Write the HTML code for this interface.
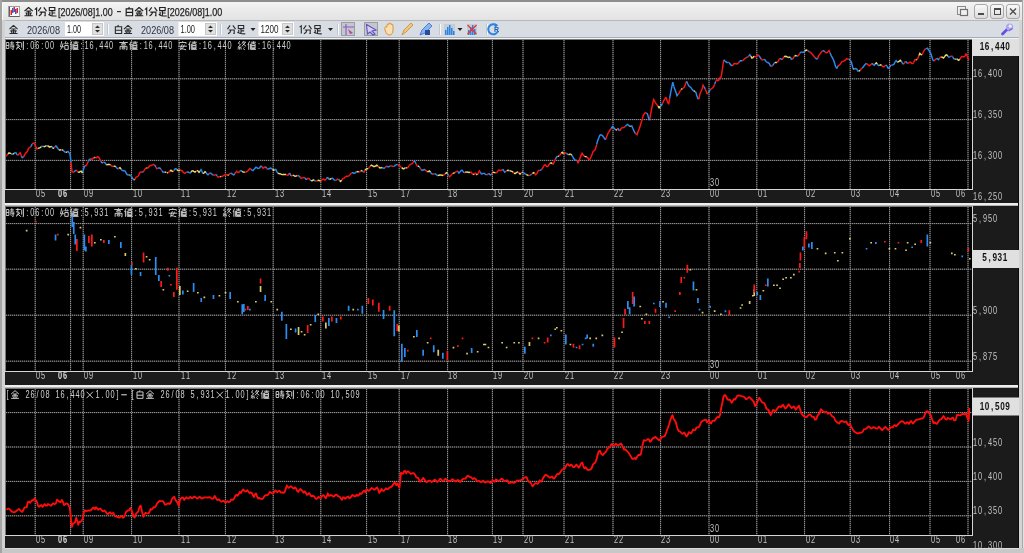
<!DOCTYPE html><html><head><meta charset="utf-8"><style>html,body{margin:0;padding:0}body{width:1024px;height:553px;overflow:hidden;background:#c0c0c0}svg{position:absolute;left:0;top:0;display:block;will-change:transform}</style></head><body>
<svg width="1024" height="553" viewBox="0 0 1024 553">
<defs>
<linearGradient id="tg" x1="0" y1="0" x2="0" y2="1"><stop offset="0" stop-color="#f4f4f4"/><stop offset="0.4" stop-color="#ececec"/><stop offset="1" stop-color="#e3e3e3"/></linearGradient>
<linearGradient id="bg" x1="0" y1="0" x2="0" y2="1"><stop offset="0" stop-color="#fbfbfb"/><stop offset="1" stop-color="#dadada"/></linearGradient>
<path id="k37329" d="M5,0.5L0.5,4.5M5,0.5L9.5,4.5M2.5,4.5H7.5M1.5,6.5H8.5M5,4V9.5M0.5,9.5H9.5M2.5,7.2L3.5,8.8M7.5,7.2L6.5,8.8" fill="none"/>
<path id="k20998" d="M3.5,0.5L0.5,4.5M6.5,0.5L9.5,4.5M2,5.5H8V9.5L7,9.5M4.5,5.5Q4,8.5 1,9.8" fill="none"/>
<path id="k36275" d="M2,0.5H8V4H2ZM5,4V9M5,6.5H8.5M2.5,5.5V9.5M1,8Q3,10 9.8,9.8" fill="none"/>
<path id="k30333" d="M5,0L4,1.8M1.5,2H8.5V9.5H1.5ZM1.5,5.8H8.5" fill="none"/>
<path id="k26178" d="M0.5,1.5H3.5V8.5H0.5ZM0.5,5H3.5M5,2H9.5M7,0V4.5M4.5,4.5H10M5,6.5H10M8.5,5V9.8L7.5,9.5M5.5,7.5L6.5,8.8" fill="none"/>
<path id="k21051" d="M2.5,0V1.2M0,1.5H6M3,2L1,4.5H4L1,8.5M0.5,9.5L5,5.5M3,7L6,10M7,1.5V7.5M9,0V9.8L8,9.5" fill="none"/>
<path id="k22987" d="M2,0L0.5,6.5H4.5M3.5,2.5Q3,7 0.5,9.8M7,0L5.5,3H9.5M8.5,1.5L9.5,3M5.5,5H9.5V9.5H5.5Z" fill="none"/>
<path id="k20516" d="M2.5,0L0.5,4.5M1.5,3V10M4,1.2H10M7,0V3M4.5,3H9V8.5H4.5ZM4.5,5H9M4.5,7H9M3.5,3V9.5H10" fill="none"/>
<path id="k39640" d="M5,0V1.2M0,1.5H10M3,2.8H7V4.5H3ZM1,6V10M1,6H9V10L8,9.8M3.5,7H6.5V9H3.5Z" fill="none"/>
<path id="k23433" d="M5,0V1.2M1,3V1.5H9V3M0,5.8H10M4.5,3.5L2.5,8.5Q6,9 9,10M7,4Q6.5,8 2,10" fill="none"/>
<path id="k32066" d="M2.5,0L1,2.5L3.5,4L0.5,7H4.5M2.5,7V10M1,8L0.5,9.5M4,8L4.5,9.5M7,0L5,3M6,1H9.5L5,6M6.5,3L10,6M7,6.5L8,7.5M6.5,8.5L8.5,10" fill="none"/>
</defs>
<rect x="0" y="0" width="1024" height="553" fill="#c8c8c8"/>
<rect x="0" y="0" width="1024" height="2" fill="#8e8e8e"/><rect x="0" y="0" width="2" height="553" fill="#a4a4a4"/>
<rect x="2" y="2" width="1020" height="18" fill="url(#tg)"/>
<rect x="2" y="2" width="1" height="18" fill="#fafafa"/>
<rect x="8.5" y="6.5" width="11" height="10" fill="#fcfcfc" stroke="#a0a0a0" stroke-width="1"/>
<path d="M9.5,6.5V16.5H19.5" stroke="#606060" fill="none"/>
<rect x="10.5" y="10" width="1.5" height="5" fill="#e82020"/>
<rect x="12" y="8" width="1.5" height="5" fill="#2060e0"/>
<rect x="13.5" y="7" width="1.5" height="5" fill="#e82020"/>
<rect x="15" y="9" width="1.5" height="5" fill="#2060e0"/>
<rect x="16.5" y="8" width="1.5" height="5" fill="#e82020"/>
<use href="#k37329" transform="translate(24.00,7.00) scale(0.9199999999999999)" stroke="#1e1e1e" stroke-width="1.25"/>
<use href="#k20998" transform="translate(37.80,7.00) scale(0.9199999999999999)" stroke="#1e1e1e" stroke-width="1.25"/>
<use href="#k36275" transform="translate(47.50,7.00) scale(0.9199999999999999)" stroke="#1e1e1e" stroke-width="1.25"/>
<use href="#k30333" transform="translate(124.80,7.00) scale(0.9199999999999999)" stroke="#1e1e1e" stroke-width="1.25"/>
<use href="#k37329" transform="translate(134.50,7.00) scale(0.9199999999999999)" stroke="#1e1e1e" stroke-width="1.25"/>
<use href="#k20998" transform="translate(148.50,7.00) scale(0.9199999999999999)" stroke="#1e1e1e" stroke-width="1.25"/>
<use href="#k36275" transform="translate(157.80,7.00) scale(0.9199999999999999)" stroke="#1e1e1e" stroke-width="1.25"/>
<path d="M34.8,9.6L36.6,8V15.6" stroke="#1e1e1e" stroke-width="1.15" fill="none"/>
<text stroke="#1e1e1e" stroke-width="0.25" x="58" y="15.5" textLength="54.599999999999994" lengthAdjust="spacingAndGlyphs" font-family="Liberation Sans" font-size="10.5" fill="#1e1e1e">[2026/08]1.00</text>
<rect x="117" y="11" width="4" height="1.2" fill="#303030"/>
<path d="M144.9,9.6L146.7,8V15.6" stroke="#1e1e1e" stroke-width="1.15" fill="none"/>
<text stroke="#1e1e1e" stroke-width="0.25" x="167.2" y="15.5" textLength="55.0" lengthAdjust="spacingAndGlyphs" font-family="Liberation Sans" font-size="10.5" fill="#1e1e1e">[2026/08]1.00</text>
<rect x="957.5" y="6.5" width="8" height="8" fill="#f0f0f0" stroke="#8a8a8a"/>
<rect x="960.5" y="9.5" width="7" height="6" fill="#f0f0f0" stroke="#707070" stroke-width="1.2"/>
<rect x="974.5" y="4.5" width="13" height="14" rx="2.5" fill="url(#bg)" stroke="#a8a8a8"/>
<rect x="990.5" y="4.5" width="13" height="14" rx="2.5" fill="url(#bg)" stroke="#a8a8a8"/>
<rect x="1006.5" y="4.5" width="13" height="14" rx="2.5" fill="url(#bg)" stroke="#a8a8a8"/>
<rect x="978" y="13" width="6" height="2" fill="#4a4a4a"/>
<rect x="994.5" y="8.5" width="6" height="6" fill="none" stroke="#4a4a4a" stroke-width="1"/><rect x="994" y="8" width="7" height="2" fill="#4a4a4a"/>
<path d="M1010,8.5L1016,14.5M1016,8.5L1010,14.5" stroke="#4a4a4a" stroke-width="1.3"/>
<rect x="5" y="20" width="1015" height="17" fill="#d8dce3"/>
<rect x="2" y="20" width="1020" height="1" fill="#b8b8b8"/>
<rect x="5" y="37" width="1015" height="1" fill="#a6aebb"/>
<use href="#k37329" transform="translate(9.00,25.00) scale(0.9)" stroke="#2a2a2a" stroke-width="1.22"/>
<text x="27" y="33.5" textLength="33" lengthAdjust="spacingAndGlyphs" font-family="Liberation Sans" font-size="10.5" fill="#2a3444">2026/08</text>
<rect x="65" y="22" width="39" height="14" fill="#ffffff"/>
<rect x="92.5" y="23.5" width="10" height="11" fill="#e0e0e0" stroke="#c8c8c8" stroke-width="1"/>
<path d="M95,28L97.5,25.5L100,28ZM95,30L97.5,32.5L100,30Z" fill="#2a2a2a"/>
<text x="67" y="32.5" textLength="14" lengthAdjust="spacingAndGlyphs" font-family="Liberation Sans" font-size="11" fill="#202020">1.00</text>
<rect x="107" y="24" width="1" height="11" fill="#c4c8ce"/><rect x="108" y="24" width="1" height="11" fill="#f8f9fa"/>
<use href="#k30333" transform="translate(114.00,25.00) scale(0.9)" stroke="#2a2a2a" stroke-width="1.22"/>
<use href="#k37329" transform="translate(123.50,25.00) scale(0.9)" stroke="#2a2a2a" stroke-width="1.22"/>
<text x="141" y="33.5" textLength="33" lengthAdjust="spacingAndGlyphs" font-family="Liberation Sans" font-size="10.5" fill="#2a3444">2026/08</text>
<rect x="178.5" y="22" width="38.5" height="14" fill="#ffffff"/>
<rect x="205.5" y="23.5" width="10" height="11" fill="#e0e0e0" stroke="#c8c8c8" stroke-width="1"/>
<path d="M208,28L210.5,25.5L213,28ZM208,30L210.5,32.5L213,30Z" fill="#2a2a2a"/>
<text x="180.5" y="32.5" textLength="14.5" lengthAdjust="spacingAndGlyphs" font-family="Liberation Sans" font-size="11" fill="#202020">1.00</text>
<rect x="220" y="24" width="1" height="11" fill="#c4c8ce"/><rect x="221" y="24" width="1" height="11" fill="#f8f9fa"/>
<use href="#k20998" transform="translate(227.00,25.00) scale(0.9)" stroke="#2a2a2a" stroke-width="1.22"/>
<use href="#k36275" transform="translate(236.50,25.00) scale(0.9)" stroke="#2a2a2a" stroke-width="1.22"/>
<path d="M250.5,28H255.5L253.0,31Z" fill="#202020"/>
<rect x="258.5" y="22" width="35.5" height="14" fill="#ffffff"/>
<rect x="282.5" y="23.5" width="10" height="11" fill="#e0e0e0" stroke="#c8c8c8" stroke-width="1"/>
<path d="M285,28L287.5,25.5L290,28ZM285,30L287.5,32.5L290,30Z" fill="#2a2a2a"/>
<text x="260.5" y="32.5" textLength="18.0" lengthAdjust="spacingAndGlyphs" font-family="Liberation Sans" font-size="11" fill="#202020">1200</text>
<path d="M299.6,27.2L301.3,25.8V33.5" stroke="#2a2a2a" stroke-width="1.1" fill="none"/>
<use href="#k20998" transform="translate(303.00,25.00) scale(0.9)" stroke="#2a2a2a" stroke-width="1.22"/>
<use href="#k36275" transform="translate(313.00,25.00) scale(0.9)" stroke="#2a2a2a" stroke-width="1.22"/>
<path d="M328,28H333L330.5,31Z" fill="#202020"/>
<rect x="337" y="24" width="1" height="11" fill="#c4c8ce"/><rect x="338" y="24" width="1" height="11" fill="#f8f9fa"/>
<rect x="341.5" y="22.5" width="13" height="13" fill="#c4c7cc" stroke="#9a9ea4" stroke-width="1"/>
<rect x="364.5" y="22.5" width="13" height="13" fill="#c4c7cc" stroke="#9a9ea4" stroke-width="1"/>
<path d="M343,27H354M346,24V35" stroke="#8858c8" stroke-width="1.1"/><path d="M348,29L353,33L350,34Z" fill="#c04090"/>
<path d="M366.5,24.5L376,30L372,31L375,34L373,35L370,32L367.5,34Z" fill="#d8d0f8" stroke="#6050c0" stroke-width="1.1"/>
<path d="M385,30Q384,26 387,27V24.5Q388,23 389,24.5V23.5Q390,22.5 391,23.5V24.5Q392,23.5 393,25V30Q393,35 389,35Q386,35 385,30Z" fill="#f8e0b0" stroke="#e09040" stroke-width="1"/>
<path d="M402,35L404,30L411,23L413,25L406,32Z" fill="#f0c878" stroke="#c88838" stroke-width="0.8"/>
<path d="M420,35L422,30L429,23L432,26L425,33Z" fill="#88b4f0" stroke="#3868c8" stroke-width="0.8"/><rect x="425" y="30" width="5" height="5" fill="#2a4aa0"/>
<rect x="439" y="24" width="1" height="11" fill="#c4c8ce"/><rect x="440" y="24" width="1" height="11" fill="#f8f9fa"/>
<rect x="444" y="24" width="11" height="11" fill="#c4ccd6"/>
<rect x="445" y="30" width="1.5" height="5" fill="#2884e4"/>
<rect x="447" y="27" width="1.5" height="8" fill="#2884e4"/>
<rect x="449" y="25" width="1.5" height="10" fill="#2884e4"/>
<rect x="451" y="28" width="1.5" height="7" fill="#2884e4"/>
<rect x="453" y="31" width="1.5" height="4" fill="#2884e4"/>
<path d="M457.5,28H462.5L460.0,31Z" fill="#202020"/>
<rect x="467" y="24" width="10" height="11" fill="#c4ccd6"/>
<rect x="468" y="30" width="1.5" height="5" fill="#2884e4"/>
<rect x="470" y="27" width="1.5" height="8" fill="#2884e4"/>
<rect x="472" y="25" width="1.5" height="10" fill="#2884e4"/>
<rect x="474" y="29" width="1.5" height="6" fill="#2884e4"/>
<path d="M467.5,25L476.5,34M476.5,25L467.5,34" stroke="#f03030" stroke-width="1.2"/>
<rect x="486" y="24" width="1" height="11" fill="#c4c8ce"/><rect x="487" y="24" width="1" height="11" fill="#f8f9fa"/>
<path d="M497,26A5,5 0 1 0 498,31" fill="none" stroke="#2884e4" stroke-width="2"/><path d="M494,23L498,25L495,28Z" fill="#2884e4"/>
<text x="494" y="32" font-family="Liberation Sans" font-size="7" font-weight="bold" fill="#2060c0">R</text>
<path d="M1002.5,34L1007.5,29" stroke="#6452e6" stroke-width="2.8" stroke-linecap="round"/><circle cx="1009.6" cy="27" r="3.6" fill="#aaa6f0"/><circle cx="1010.2" cy="26.2" r="1.6" fill="#eceef8"/><path d="M1008.5,31L1012.5,28.5" stroke="#7a60d8" stroke-width="1.2"/>
<rect x="0" y="20" width="2" height="533" fill="#a4a4a4"/>
<rect x="2" y="20" width="3" height="533" fill="#d2d2d2"/>
<rect x="1019" y="20" width="3" height="533" fill="#d4d4d4"/>
<rect x="1022" y="0" width="1" height="553" fill="#a8a8a8"/><rect x="1023" y="0" width="1" height="553" fill="#e2e2e2"/>
<rect x="5" y="38" width="1014" height="1" fill="#f2f2f2"/>
<rect x="5" y="39" width="1014" height="509" fill="#1b1b1b"/>
<rect x="5" y="203" width="1014" height="2" fill="#eeeeee"/><rect x="5" y="205" width="1014" height="1" fill="#b4b4b4"/>
<rect x="5" y="385" width="1014" height="2" fill="#eeeeee"/><rect x="5" y="387" width="1014" height="1" fill="#b4b4b4"/>
<rect x="1018" y="39" width="1" height="509" fill="#0c0c0c"/>
<rect x="5" y="39" width="967" height="150" fill="#000"/>
<rect x="5" y="39" width="967" height="1" fill="#787878"/><rect x="5" y="39" width="1" height="150" fill="#787878"/>
<rect x="5" y="189" width="968" height="1" fill="#d6d6d6"/><rect x="972" y="39" width="1" height="150" fill="#d6d6d6"/>
<path d="M35.2,40V189M70.6,40V189M83.2,40V189M131.6,40V189M179,40V189M225.4,40V189M273.2,40V189M320.8,40V189M366.6,40V189M399.2,40V189M447.6,40V189M492.4,40V189M523,40V189M564,40V189M613,40V189M660.6,40V189M709,40V189M756.8,40V189M804.6,40V189M850.2,40V189M889.6,40V189M930,40V189M968,40V189M6,78.8H972M6,119.6H972M6,160.4H972" stroke="#3c3c3c" stroke-width="1" fill="none"/>
<path d="M35.2,40V189M70.6,40V189M83.2,40V189M131.6,40V189M179,40V189M225.4,40V189M273.2,40V189M320.8,40V189M366.6,40V189M399.2,40V189M447.6,40V189M492.4,40V189M523,40V189M564,40V189M613,40V189M660.6,40V189M709,40V189M756.8,40V189M804.6,40V189M850.2,40V189M889.6,40V189M930,40V189M968,40V189M6,78.8H972M6,119.6H972M6,160.4H972" stroke="#989898" stroke-width="1" stroke-dasharray="1 1" fill="none"/>
<text transform="translate(0,197.2) scale(0.74,1)" x="51.35 58.11" y="0" text-anchor="middle" font-family="Liberation Sans" font-size="10" fill="#c4c4c4">05</text>
<text transform="translate(0,197.2) scale(0.74,1)" x="81.08 87.84" y="0" text-anchor="middle" font-family="Liberation Sans" font-size="10" font-weight="bold" fill="#d8d8d8">06</text>
<text transform="translate(0,197.2) scale(0.74,1)" x="116.22 122.97" y="0" text-anchor="middle" font-family="Liberation Sans" font-size="10" fill="#c4c4c4">09</text>
<text transform="translate(0,197.2) scale(0.74,1)" x="182.43 189.19" y="0" text-anchor="middle" font-family="Liberation Sans" font-size="10" fill="#c4c4c4">10</text>
<text transform="translate(0,197.2) scale(0.74,1)" x="247.30 254.05" y="0" text-anchor="middle" font-family="Liberation Sans" font-size="10" fill="#c4c4c4">11</text>
<text transform="translate(0,197.2) scale(0.74,1)" x="309.46 316.22" y="0" text-anchor="middle" font-family="Liberation Sans" font-size="10" fill="#c4c4c4">12</text>
<text transform="translate(0,197.2) scale(0.74,1)" x="374.32 381.08" y="0" text-anchor="middle" font-family="Liberation Sans" font-size="10" fill="#c4c4c4">13</text>
<text transform="translate(0,197.2) scale(0.74,1)" x="437.84 444.59" y="0" text-anchor="middle" font-family="Liberation Sans" font-size="10" fill="#c4c4c4">14</text>
<text transform="translate(0,197.2) scale(0.74,1)" x="500.00 506.76" y="0" text-anchor="middle" font-family="Liberation Sans" font-size="10" fill="#c4c4c4">15</text>
<text transform="translate(0,197.2) scale(0.74,1)" x="544.59 551.35" y="0" text-anchor="middle" font-family="Liberation Sans" font-size="10" fill="#c4c4c4">17</text>
<text transform="translate(0,197.2) scale(0.74,1)" x="608.11 614.86" y="0" text-anchor="middle" font-family="Liberation Sans" font-size="10" fill="#c4c4c4">18</text>
<text transform="translate(0,197.2) scale(0.74,1)" x="668.92 675.68" y="0" text-anchor="middle" font-family="Liberation Sans" font-size="10" fill="#c4c4c4">19</text>
<text transform="translate(0,197.2) scale(0.74,1)" x="710.81 717.57" y="0" text-anchor="middle" font-family="Liberation Sans" font-size="10" fill="#c4c4c4">20</text>
<text transform="translate(0,197.2) scale(0.74,1)" x="766.22 772.97" y="0" text-anchor="middle" font-family="Liberation Sans" font-size="10" fill="#c4c4c4">21</text>
<text transform="translate(0,197.2) scale(0.74,1)" x="832.43 839.19" y="0" text-anchor="middle" font-family="Liberation Sans" font-size="10" fill="#c4c4c4">22</text>
<text transform="translate(0,197.2) scale(0.74,1)" x="895.95 902.70" y="0" text-anchor="middle" font-family="Liberation Sans" font-size="10" fill="#c4c4c4">23</text>
<text transform="translate(0,197.2) scale(0.74,1)" x="962.16 968.92" y="0" text-anchor="middle" font-family="Liberation Sans" font-size="10" fill="#c4c4c4">00</text>
<text transform="translate(0,197.2) scale(0.74,1)" x="1027.03 1033.78" y="0" text-anchor="middle" font-family="Liberation Sans" font-size="10" fill="#c4c4c4">01</text>
<text transform="translate(0,197.2) scale(0.74,1)" x="1091.89 1098.65" y="0" text-anchor="middle" font-family="Liberation Sans" font-size="10" fill="#c4c4c4">02</text>
<text transform="translate(0,197.2) scale(0.74,1)" x="1152.70 1159.46" y="0" text-anchor="middle" font-family="Liberation Sans" font-size="10" fill="#c4c4c4">03</text>
<text transform="translate(0,197.2) scale(0.74,1)" x="1205.41 1212.16" y="0" text-anchor="middle" font-family="Liberation Sans" font-size="10" fill="#c4c4c4">04</text>
<text transform="translate(0,197.2) scale(0.74,1)" x="1260.81 1267.57" y="0" text-anchor="middle" font-family="Liberation Sans" font-size="10" fill="#c4c4c4">05</text>
<text transform="translate(0,197.2) scale(0.74,1)" x="1294.59 1301.35" y="0" text-anchor="middle" font-family="Liberation Sans" font-size="10" fill="#c4c4c4">06</text>
<text transform="translate(0,76.8) scale(0.74,1)" x="1317.57 1324.32 1331.08 1337.84 1344.59 1351.35" y="0" text-anchor="middle" font-family="Liberation Sans" font-size="10" fill="#c4c4c4">16,400</text>
<text transform="translate(0,117.8) scale(0.74,1)" x="1317.57 1324.32 1331.08 1337.84 1344.59 1351.35" y="0" text-anchor="middle" font-family="Liberation Sans" font-size="10" fill="#c4c4c4">16,350</text>
<text transform="translate(0,158.8) scale(0.74,1)" x="1317.57 1324.32 1331.08 1337.84 1344.59 1351.35" y="0" text-anchor="middle" font-family="Liberation Sans" font-size="10" fill="#c4c4c4">16,300</text>
<text transform="translate(0,199.8) scale(0.74,1)" x="1317.57 1324.32 1331.08 1337.84 1344.59 1351.35" y="0" text-anchor="middle" font-family="Liberation Sans" font-size="10" fill="#c4c4c4">16,250</text>
<rect x="5" y="206" width="967" height="165" fill="#000"/>
<rect x="5" y="206" width="967" height="1" fill="#787878"/><rect x="5" y="206" width="1" height="165" fill="#787878"/>
<rect x="5" y="371" width="968" height="1" fill="#d6d6d6"/><rect x="972" y="206" width="1" height="165" fill="#d6d6d6"/>
<path d="M35.2,207V371M70.6,207V371M83.2,207V371M131.6,207V371M179,207V371M225.4,207V371M273.2,207V371M320.8,207V371M366.6,207V371M399.2,207V371M447.6,207V371M492.4,207V371M523,207V371M564,207V371M613,207V371M660.6,207V371M709,207V371M756.8,207V371M804.6,207V371M850.2,207V371M889.6,207V371M930,207V371M968,207V371M6,223.6H972M6,269.2H972M6,315.2H972M6,361.2H972" stroke="#3c3c3c" stroke-width="1" fill="none"/>
<path d="M35.2,207V371M70.6,207V371M83.2,207V371M131.6,207V371M179,207V371M225.4,207V371M273.2,207V371M320.8,207V371M366.6,207V371M399.2,207V371M447.6,207V371M492.4,207V371M523,207V371M564,207V371M613,207V371M660.6,207V371M709,207V371M756.8,207V371M804.6,207V371M850.2,207V371M889.6,207V371M930,207V371M968,207V371M6,223.6H972M6,269.2H972M6,315.2H972M6,361.2H972" stroke="#989898" stroke-width="1" stroke-dasharray="1 1" fill="none"/>
<text transform="translate(0,379.2) scale(0.74,1)" x="51.35 58.11" y="0" text-anchor="middle" font-family="Liberation Sans" font-size="10" fill="#c4c4c4">05</text>
<text transform="translate(0,379.2) scale(0.74,1)" x="81.08 87.84" y="0" text-anchor="middle" font-family="Liberation Sans" font-size="10" font-weight="bold" fill="#d8d8d8">06</text>
<text transform="translate(0,379.2) scale(0.74,1)" x="116.22 122.97" y="0" text-anchor="middle" font-family="Liberation Sans" font-size="10" fill="#c4c4c4">09</text>
<text transform="translate(0,379.2) scale(0.74,1)" x="182.43 189.19" y="0" text-anchor="middle" font-family="Liberation Sans" font-size="10" fill="#c4c4c4">10</text>
<text transform="translate(0,379.2) scale(0.74,1)" x="247.30 254.05" y="0" text-anchor="middle" font-family="Liberation Sans" font-size="10" fill="#c4c4c4">11</text>
<text transform="translate(0,379.2) scale(0.74,1)" x="309.46 316.22" y="0" text-anchor="middle" font-family="Liberation Sans" font-size="10" fill="#c4c4c4">12</text>
<text transform="translate(0,379.2) scale(0.74,1)" x="374.32 381.08" y="0" text-anchor="middle" font-family="Liberation Sans" font-size="10" fill="#c4c4c4">13</text>
<text transform="translate(0,379.2) scale(0.74,1)" x="437.84 444.59" y="0" text-anchor="middle" font-family="Liberation Sans" font-size="10" fill="#c4c4c4">14</text>
<text transform="translate(0,379.2) scale(0.74,1)" x="500.00 506.76" y="0" text-anchor="middle" font-family="Liberation Sans" font-size="10" fill="#c4c4c4">15</text>
<text transform="translate(0,379.2) scale(0.74,1)" x="544.59 551.35" y="0" text-anchor="middle" font-family="Liberation Sans" font-size="10" fill="#c4c4c4">17</text>
<text transform="translate(0,379.2) scale(0.74,1)" x="608.11 614.86" y="0" text-anchor="middle" font-family="Liberation Sans" font-size="10" fill="#c4c4c4">18</text>
<text transform="translate(0,379.2) scale(0.74,1)" x="668.92 675.68" y="0" text-anchor="middle" font-family="Liberation Sans" font-size="10" fill="#c4c4c4">19</text>
<text transform="translate(0,379.2) scale(0.74,1)" x="710.81 717.57" y="0" text-anchor="middle" font-family="Liberation Sans" font-size="10" fill="#c4c4c4">20</text>
<text transform="translate(0,379.2) scale(0.74,1)" x="766.22 772.97" y="0" text-anchor="middle" font-family="Liberation Sans" font-size="10" fill="#c4c4c4">21</text>
<text transform="translate(0,379.2) scale(0.74,1)" x="832.43 839.19" y="0" text-anchor="middle" font-family="Liberation Sans" font-size="10" fill="#c4c4c4">22</text>
<text transform="translate(0,379.2) scale(0.74,1)" x="895.95 902.70" y="0" text-anchor="middle" font-family="Liberation Sans" font-size="10" fill="#c4c4c4">23</text>
<text transform="translate(0,379.2) scale(0.74,1)" x="962.16 968.92" y="0" text-anchor="middle" font-family="Liberation Sans" font-size="10" fill="#c4c4c4">00</text>
<text transform="translate(0,379.2) scale(0.74,1)" x="1027.03 1033.78" y="0" text-anchor="middle" font-family="Liberation Sans" font-size="10" fill="#c4c4c4">01</text>
<text transform="translate(0,379.2) scale(0.74,1)" x="1091.89 1098.65" y="0" text-anchor="middle" font-family="Liberation Sans" font-size="10" fill="#c4c4c4">02</text>
<text transform="translate(0,379.2) scale(0.74,1)" x="1152.70 1159.46" y="0" text-anchor="middle" font-family="Liberation Sans" font-size="10" fill="#c4c4c4">03</text>
<text transform="translate(0,379.2) scale(0.74,1)" x="1205.41 1212.16" y="0" text-anchor="middle" font-family="Liberation Sans" font-size="10" fill="#c4c4c4">04</text>
<text transform="translate(0,379.2) scale(0.74,1)" x="1260.81 1267.57" y="0" text-anchor="middle" font-family="Liberation Sans" font-size="10" fill="#c4c4c4">05</text>
<text transform="translate(0,379.2) scale(0.74,1)" x="1294.59 1301.35" y="0" text-anchor="middle" font-family="Liberation Sans" font-size="10" fill="#c4c4c4">06</text>
<text transform="translate(0,221.8) scale(0.74,1)" x="1317.57 1324.32 1331.08 1337.84 1344.59" y="0" text-anchor="middle" font-family="Liberation Sans" font-size="10" fill="#c4c4c4">5,950</text>
<text transform="translate(0,313.8) scale(0.74,1)" x="1317.57 1324.32 1331.08 1337.84 1344.59" y="0" text-anchor="middle" font-family="Liberation Sans" font-size="10" fill="#c4c4c4">5,900</text>
<text transform="translate(0,359.8) scale(0.74,1)" x="1317.57 1324.32 1331.08 1337.84 1344.59" y="0" text-anchor="middle" font-family="Liberation Sans" font-size="10" fill="#c4c4c4">5,875</text>
<rect x="5" y="388" width="967" height="147" fill="#000"/>
<rect x="5" y="388" width="967" height="1" fill="#787878"/><rect x="5" y="388" width="1" height="147" fill="#787878"/>
<rect x="5" y="535" width="968" height="1" fill="#d6d6d6"/><rect x="972" y="388" width="1" height="147" fill="#d6d6d6"/>
<path d="M35.2,389V535M70.6,389V535M83.2,389V535M131.6,389V535M179,389V535M225.4,389V535M273.2,389V535M320.8,389V535M366.6,389V535M399.2,389V535M447.6,389V535M492.4,389V535M523,389V535M564,389V535M613,389V535M660.6,389V535M709,389V535M756.8,389V535M804.6,389V535M850.2,389V535M889.6,389V535M930,389V535M968,389V535M6,412.6H972M6,447H972M6,481.4H972M6,515.8H972" stroke="#3c3c3c" stroke-width="1" fill="none"/>
<path d="M35.2,389V535M70.6,389V535M83.2,389V535M131.6,389V535M179,389V535M225.4,389V535M273.2,389V535M320.8,389V535M366.6,389V535M399.2,389V535M447.6,389V535M492.4,389V535M523,389V535M564,389V535M613,389V535M660.6,389V535M709,389V535M756.8,389V535M804.6,389V535M850.2,389V535M889.6,389V535M930,389V535M968,389V535M6,412.6H972M6,447H972M6,481.4H972M6,515.8H972" stroke="#989898" stroke-width="1" stroke-dasharray="1 1" fill="none"/>
<text transform="translate(0,543.2) scale(0.74,1)" x="51.35 58.11" y="0" text-anchor="middle" font-family="Liberation Sans" font-size="10" fill="#c4c4c4">05</text>
<text transform="translate(0,543.2) scale(0.74,1)" x="81.08 87.84" y="0" text-anchor="middle" font-family="Liberation Sans" font-size="10" font-weight="bold" fill="#d8d8d8">06</text>
<text transform="translate(0,543.2) scale(0.74,1)" x="116.22 122.97" y="0" text-anchor="middle" font-family="Liberation Sans" font-size="10" fill="#c4c4c4">09</text>
<text transform="translate(0,543.2) scale(0.74,1)" x="182.43 189.19" y="0" text-anchor="middle" font-family="Liberation Sans" font-size="10" fill="#c4c4c4">10</text>
<text transform="translate(0,543.2) scale(0.74,1)" x="247.30 254.05" y="0" text-anchor="middle" font-family="Liberation Sans" font-size="10" fill="#c4c4c4">11</text>
<text transform="translate(0,543.2) scale(0.74,1)" x="309.46 316.22" y="0" text-anchor="middle" font-family="Liberation Sans" font-size="10" fill="#c4c4c4">12</text>
<text transform="translate(0,543.2) scale(0.74,1)" x="374.32 381.08" y="0" text-anchor="middle" font-family="Liberation Sans" font-size="10" fill="#c4c4c4">13</text>
<text transform="translate(0,543.2) scale(0.74,1)" x="437.84 444.59" y="0" text-anchor="middle" font-family="Liberation Sans" font-size="10" fill="#c4c4c4">14</text>
<text transform="translate(0,543.2) scale(0.74,1)" x="500.00 506.76" y="0" text-anchor="middle" font-family="Liberation Sans" font-size="10" fill="#c4c4c4">15</text>
<text transform="translate(0,543.2) scale(0.74,1)" x="544.59 551.35" y="0" text-anchor="middle" font-family="Liberation Sans" font-size="10" fill="#c4c4c4">17</text>
<text transform="translate(0,543.2) scale(0.74,1)" x="608.11 614.86" y="0" text-anchor="middle" font-family="Liberation Sans" font-size="10" fill="#c4c4c4">18</text>
<text transform="translate(0,543.2) scale(0.74,1)" x="668.92 675.68" y="0" text-anchor="middle" font-family="Liberation Sans" font-size="10" fill="#c4c4c4">19</text>
<text transform="translate(0,543.2) scale(0.74,1)" x="710.81 717.57" y="0" text-anchor="middle" font-family="Liberation Sans" font-size="10" fill="#c4c4c4">20</text>
<text transform="translate(0,543.2) scale(0.74,1)" x="766.22 772.97" y="0" text-anchor="middle" font-family="Liberation Sans" font-size="10" fill="#c4c4c4">21</text>
<text transform="translate(0,543.2) scale(0.74,1)" x="832.43 839.19" y="0" text-anchor="middle" font-family="Liberation Sans" font-size="10" fill="#c4c4c4">22</text>
<text transform="translate(0,543.2) scale(0.74,1)" x="895.95 902.70" y="0" text-anchor="middle" font-family="Liberation Sans" font-size="10" fill="#c4c4c4">23</text>
<text transform="translate(0,543.2) scale(0.74,1)" x="962.16 968.92" y="0" text-anchor="middle" font-family="Liberation Sans" font-size="10" fill="#c4c4c4">00</text>
<text transform="translate(0,543.2) scale(0.74,1)" x="1027.03 1033.78" y="0" text-anchor="middle" font-family="Liberation Sans" font-size="10" fill="#c4c4c4">01</text>
<text transform="translate(0,543.2) scale(0.74,1)" x="1091.89 1098.65" y="0" text-anchor="middle" font-family="Liberation Sans" font-size="10" fill="#c4c4c4">02</text>
<text transform="translate(0,543.2) scale(0.74,1)" x="1152.70 1159.46" y="0" text-anchor="middle" font-family="Liberation Sans" font-size="10" fill="#c4c4c4">03</text>
<text transform="translate(0,543.2) scale(0.74,1)" x="1205.41 1212.16" y="0" text-anchor="middle" font-family="Liberation Sans" font-size="10" fill="#c4c4c4">04</text>
<text transform="translate(0,543.2) scale(0.74,1)" x="1260.81 1267.57" y="0" text-anchor="middle" font-family="Liberation Sans" font-size="10" fill="#c4c4c4">05</text>
<text transform="translate(0,543.2) scale(0.74,1)" x="1294.59 1301.35" y="0" text-anchor="middle" font-family="Liberation Sans" font-size="10" fill="#c4c4c4">06</text>
<text transform="translate(0,445.8) scale(0.74,1)" x="1317.57 1324.32 1331.08 1337.84 1344.59 1351.35" y="0" text-anchor="middle" font-family="Liberation Sans" font-size="10" fill="#c4c4c4">10,450</text>
<text transform="translate(0,479.8) scale(0.74,1)" x="1317.57 1324.32 1331.08 1337.84 1344.59 1351.35" y="0" text-anchor="middle" font-family="Liberation Sans" font-size="10" fill="#c4c4c4">10,400</text>
<text transform="translate(0,513.8) scale(0.74,1)" x="1317.57 1324.32 1331.08 1337.84 1344.59 1351.35" y="0" text-anchor="middle" font-family="Liberation Sans" font-size="10" fill="#c4c4c4">10,350</text>
<text transform="translate(0,548.8) scale(0.74,1)" x="1317.57 1324.32 1331.08 1337.84 1344.59 1351.35" y="0" text-anchor="middle" font-family="Liberation Sans" font-size="10" fill="#c4c4c4">10,300</text>
<clipPath id="c1"><rect x="6" y="40" width="966" height="149"/></clipPath>
<clipPath id="c2"><rect x="6" y="207" width="966" height="164"/></clipPath>
<clipPath id="c3"><rect x="6" y="389" width="966" height="146"/></clipPath>
<g clip-path="url(#c1)" fill="none" stroke-width="1.45" stroke-linejoin="miter" stroke-linecap="butt">
<path d="M6.0,156.2L7.0,155.1L8.0,154.0M17.1,154.8L18.1,154.9L19.2,153.6M19.2,153.6L20.2,152.8L21.3,155.8M23.4,157.4L24.4,155.1M24.4,155.1L25.4,153.4M25.4,153.4L26.5,152.4L27.5,151.2L28.6,148.2M28.6,148.2L29.8,147.4L30.9,146.8M32.1,144.0L33.2,142.9M33.2,142.9L34.4,143.5L35.7,146.3M35.7,146.3L37.0,148.9L38.0,148.3M53.9,147.9L55.0,146.5M61.0,149.8L62.0,149.6M71.0,162.0L72.0,171.9L73.2,172.0L74.4,172.0M75.6,169.8L76.8,170.7L77.9,171.8M85.0,165.5L86.1,165.7L87.3,163.5L88.4,161.3M90.7,158.7L91.8,159.4L93.0,158.4L94.2,157.4M95.3,157.4L96.4,157.7L97.6,156.6L98.7,157.2M98.7,157.2L99.8,159.2L100.8,161.2M103.0,162.8L104.1,161.9M110.5,165.0L111.6,165.9L112.7,166.3L113.7,166.3M117.9,169.1L118.9,168.2M134.7,179.7L135.8,177.4M135.8,177.4L136.8,176.9L137.9,176.5M137.9,176.5L138.9,174.6L140.0,172.1M140.0,172.1L141.1,171.9L142.1,172.4M143.2,171.8L144.2,170.3L145.2,168.7L146.3,167.9M147.3,168.1L148.4,167.6L149.4,166.0M149.4,166.0L150.5,165.4L151.5,165.5L152.6,164.6M152.6,164.6L153.6,164.5L154.7,165.0M155.7,166.9L156.7,168.7L157.8,168.4M160.9,169.3L161.9,170.7M166.0,172.0L167.0,172.8M168.0,172.9L169.0,172.0L170.0,171.1M173.0,171.7L174.0,170.4M180.0,170.2L181.0,170.0M181.0,170.0L182.0,170.9L183.0,171.9L184.0,173.0M184.0,173.0L185.0,173.2L186.0,172.5L187.0,171.9M196.0,171.3L197.0,170.5M209.0,173.8L210.0,172.8M213.0,175.1L214.0,175.2M214.0,175.2L215.0,174.9L216.0,174.6M217.0,175.7L218.1,177.1L219.1,176.9L220.2,176.7M221.2,176.4L222.3,176.3L223.4,175.8M223.4,175.8L224.4,175.0L225.5,174.5L226.5,174.9M226.5,174.9L227.6,175.4M228.6,174.8L229.6,173.9L230.7,173.0M234.8,173.5L235.8,172.2M235.8,172.2L236.8,171.3L237.9,172.6M237.9,172.6L238.9,172.3L239.9,171.3M245.0,172.1L246.0,172.0L247.0,171.7L248.0,170.9M248.0,170.9L249.0,169.5M249.0,169.5L250.0,168.5L251.0,169.3M261.5,165.8L262.5,167.9L263.5,167.9L264.5,167.3M264.5,167.3L265.5,166.6M266.5,168.1L267.5,169.4M286.0,174.5L287.0,175.1L288.0,175.2L289.0,173.4M291.0,176.0L292.0,175.7L293.0,175.0M297.0,175.6L298.0,175.5M300.0,177.0L301.0,178.2L302.0,178.1M302.0,178.1L303.0,177.7L304.0,177.4L305.0,177.8M307.0,179.1L308.0,178.3L309.1,178.7L310.1,179.8M315.4,181.0L316.4,181.1L317.5,180.6M320.6,181.1L321.8,180.1L322.9,179.0M322.9,179.0L324.1,179.5L325.2,180.4M325.2,180.4L326.4,178.6M335.6,180.5L336.6,179.8L337.6,179.2L338.6,179.3M341.6,180.3L342.6,178.8L343.6,178.4M343.6,178.4L344.7,177.7L345.7,176.5M345.7,176.5L346.8,176.3L347.8,176.2L348.8,176.1M348.8,176.1L349.9,174.9M349.9,174.9L350.9,173.5M350.9,173.5L351.9,172.7M359.0,171.9L360.0,171.8L361.0,170.8M363.0,171.9L364.0,172.2L365.0,169.8M368.2,168.6L369.3,167.4M369.3,167.4L370.4,165.8M377.8,166.0L378.9,167.0M385.2,167.5L386.2,166.4L387.3,166.3M390.4,165.8L391.4,165.9L392.4,166.2M392.4,166.2L393.5,166.6M397.6,164.5L398.6,165.1L399.7,165.9M399.7,165.9L400.7,166.8M400.7,166.8L401.7,167.6M406.8,168.0L407.9,167.4L408.9,166.1L409.9,164.8M409.9,164.8L410.9,164.0M410.9,164.0L411.9,163.9L413.0,162.7M413.0,162.7L414.0,161.2M416.0,163.7L417.0,165.8L418.0,166.3M420.0,167.8L421.0,169.5M425.2,169.9L426.3,170.9L427.3,171.8M432.6,174.4L433.6,174.0L434.7,173.6M443.2,175.5L444.3,174.7L445.3,173.7M448.5,175.3L449.5,176.7L450.6,175.7L451.6,174.5M451.6,174.5L452.7,173.4M454.7,172.8L455.8,171.9L456.8,171.0M456.8,171.0L457.8,171.5M464.0,172.9L465.1,172.4M470.1,172.3L471.2,172.2L472.2,173.5L473.2,174.7M474.2,174.2L475.3,173.1L476.3,174.2M477.3,174.9L478.4,172.9L479.4,170.9L480.4,172.2M486.6,175.0L487.6,174.3L488.7,173.4M491.7,174.0L492.7,172.6M495.7,172.9L496.7,172.6L497.7,171.3M497.7,171.3L498.7,170.1L499.7,170.2M499.7,170.2L500.7,170.4L501.7,170.1L502.8,169.2M505.8,171.5L506.9,170.7M513.0,172.1L514.0,173.1M518.0,172.0L519.0,173.0M521.0,173.3L522.0,172.1M528.5,175.5L529.5,175.4L530.5,175.2M531.5,174.3L532.5,173.5M534.5,173.2L535.5,174.8L536.5,174.1M536.5,174.1L537.5,172.3M537.5,172.3L538.5,170.5L539.5,170.5M541.7,169.5L542.8,167.7L543.9,165.9L545.0,164.6M545.0,164.6L546.0,165.7L547.0,166.9M547.0,166.9L548.1,166.1L549.1,164.5L550.1,162.9M552.2,163.5L553.2,164.0L554.4,161.4L555.5,158.8M559.0,156.1L560.1,154.9L561.2,153.0M563.3,153.8L564.4,153.8L565.4,152.9L566.5,153.3M577.0,160.4L578.0,162.7L579.0,161.2L580.0,158.3M580.0,158.3L581.1,155.4L582.1,153.3L583.2,155.0M583.2,155.0L584.4,156.4M586.7,156.8L587.9,158.0L589.0,159.8M589.0,159.8L590.1,158.9L591.2,156.5M591.2,156.5L592.3,153.8M592.3,153.8L593.4,151.1L594.5,150.8M594.5,150.8L595.6,148.6L596.7,144.4M605.5,139.8L606.6,136.7M606.6,136.7L607.8,133.7L609.0,131.5M609.0,131.5L610.1,130.0L611.2,128.5M616.9,129.7L618.1,128.3M619.2,130.6L620.2,130.3L621.3,128.2M621.3,128.2L622.3,127.7L623.4,127.7M623.4,127.7L624.4,127.1L625.4,126.2M635.0,133.1L636.0,133.9L637.1,134.6L638.1,131.6M638.1,131.6L639.2,128.8L640.2,126.0M640.2,126.0L641.2,122.4L642.3,118.9M642.3,118.9L643.3,115.4L644.4,113.6M644.4,113.6L645.4,112.4M645.4,112.4L646.4,113.2M649.5,120.3L650.5,114.8M650.5,114.8L651.5,109.4M651.5,109.4L652.6,104.2L653.6,99.6L654.7,101.4M654.7,101.4L655.8,103.1L656.9,104.6L658.0,106.1M662.5,103.5L663.7,100.9M663.7,100.9L664.9,98.5M664.9,98.5L666.0,97.3M666.0,97.3L667.4,101.5L668.7,104.3M668.7,104.3L669.7,98.1M678.1,94.3L679.1,92.8M679.1,92.8L680.2,90.8M680.2,90.8L681.3,89.4M682.3,88.7L683.4,88.0L684.5,86.8L685.5,84.0M685.5,84.0L686.6,81.2M698.0,99.0L699.0,98.5L700.0,93.5M700.0,93.5L701.0,91.5M701.0,91.5L702.1,89.0M702.1,89.0L703.1,85.2L704.1,86.9M705.2,88.9L706.2,91.5L707.2,94.1M707.2,94.1L708.3,92.9M710.4,89.5L711.5,88.7L712.5,88.1M712.5,88.1L713.6,86.7L714.7,84.1M715.7,81.5L716.8,79.5M716.8,79.5L717.8,80.8L718.9,80.2M718.9,80.2L720.0,77.5L721.0,77.6M721.0,77.6L722.4,69.4M722.4,69.4L723.7,59.9M727.9,62.4L728.9,62.3M732.0,65.9L733.1,64.7M733.1,64.7L734.1,63.5L735.2,63.7M735.2,63.7L736.2,63.8M736.2,63.8L737.3,64.0L738.3,62.9M738.3,62.9L739.4,61.7M742.5,60.7L743.6,59.9L744.6,58.8M744.6,58.8L745.7,57.8M746.7,57.3L747.8,56.8L748.8,56.0M753.9,56.2L754.9,56.9M754.9,56.9L756.0,56.8L757.0,55.9M757.0,55.9L758.0,54.9L759.0,55.6M761.0,58.8L762.0,60.0L763.0,59.7L764.0,59.3M770.7,66.4L771.7,66.2L772.8,65.4M776.9,62.5L778.0,61.5L779.0,59.7L780.0,58.3M782.1,59.6L783.1,58.1M783.1,58.1L784.1,56.6M792.5,59.3L793.5,57.7L794.6,56.1M797.7,56.3L798.8,54.9L799.8,53.3M807.3,50.3L808.4,51.1M809.5,51.9L810.6,52.4L811.8,53.7L812.9,55.0M812.9,55.0L814.0,56.4L815.2,57.9M817.5,59.0L818.5,55.9L819.5,54.6L820.6,53.3M820.6,53.3L821.6,51.8L822.7,50.8M824.8,51.7L825.9,52.7M825.9,52.7L826.9,52.8L828.0,51.7M828.0,51.7L829.1,50.5L830.1,53.0M837.8,66.0L838.9,65.4L840.0,64.6M840.0,64.6L841.1,62.9M841.1,62.9L842.2,61.4M842.2,61.4L843.4,61.5M843.4,61.5L844.5,60.6L845.7,59.6M845.7,59.6L846.8,58.6L848.0,59.3M848.0,59.3L849.1,59.1M860.1,70.5L861.1,69.0L862.2,68.1M866.2,63.3L867.2,64.1L868.2,65.1M868.2,65.1L869.2,66.1M869.2,66.1L870.2,65.1M870.2,65.1L871.2,64.2L872.2,63.2M881.6,65.4L882.6,66.4M882.6,66.4L883.7,67.0M883.7,67.0L884.8,66.0L885.8,65.1M891.0,65.1L892.1,65.0M903.4,64.4L904.4,62.9L905.5,61.3M907.5,63.4L908.5,62.9L909.6,62.3M909.6,62.3L910.6,62.2L911.6,63.3L912.7,63.9M912.7,63.9L913.7,62.6M913.7,62.6L914.7,59.9L915.8,59.7M916.8,59.7L917.9,57.8L918.9,55.5M922.0,54.7L923.1,52.5M923.1,52.5L924.2,50.4L925.3,48.9M934.1,60.9L935.1,59.8L936.2,58.7M939.3,58.5L940.4,57.4L941.4,56.6M950.7,56.4L951.7,55.9M951.7,55.9L952.7,56.8M959.8,59.3L960.8,57.6L961.9,56.4L962.9,56.7M962.9,56.7L963.9,57.0L965.0,55.9L966.0,53.6M966.0,53.6L967.4,56.5L968.7,60.2" stroke="#ff1414"/>
<path d="M11.0,153.7L12.0,154.2L13.0,154.1M14.0,153.4L15.0,152.7L16.1,152.9L17.1,154.8M21.3,155.8L22.3,157.7L23.4,157.4M30.9,146.8L32.1,144.0M41.2,146.9L42.2,146.2M42.2,146.2L43.3,146.4M46.5,145.6L47.5,145.6M51.8,146.4L52.9,148.6M55.0,146.5L56.0,146.0L57.0,147.3L58.0,148.6M58.0,148.6L59.0,150.0M63.0,150.3L64.0,151.2L65.0,152.1L66.0,152.4M67.0,152.0L68.0,151.5L69.0,152.6L70.0,154.1M70.0,154.1L71.0,162.0M74.4,172.0L75.6,169.8M82.5,173.1L83.8,168.2L85.0,165.5M88.4,161.3L89.6,159.1M89.6,159.1L90.7,158.7M100.8,161.2L101.9,162.8L103.0,162.8M104.1,161.9L105.2,163.0L106.2,164.6M115.8,166.7L116.8,167.9M116.8,167.9L117.9,169.1M121.0,169.0L122.1,170.4L123.2,170.7L124.3,170.5M124.3,170.5L125.4,171.4L126.5,173.7M126.5,173.7L127.5,174.8L128.6,174.9M129.6,175.0L130.6,175.4M130.6,175.4L131.6,176.9L132.6,178.4L133.7,179.7M142.1,172.4L143.2,171.8M154.7,165.0L155.7,166.9M157.8,168.4L158.8,167.9L159.8,168.0L160.9,169.3M161.9,170.7L162.9,172.1L164.0,172.2M164.0,172.2L165.0,172.3M174.0,170.4L175.0,169.0L176.0,168.8L177.0,169.6M187.0,171.9L188.0,171.9L189.0,172.6L190.0,173.2M190.0,173.2L191.0,172.0M200.0,171.2L201.0,169.6L202.0,171.5M202.0,171.5L203.0,173.6M206.0,172.4L207.0,174.0L208.0,174.8L209.0,173.8M210.0,172.8L211.0,173.4L212.0,174.2L213.0,175.1M216.0,174.6L217.0,175.7M230.7,173.0L231.7,173.5L232.7,174.5M232.7,174.5L233.8,174.8L234.8,173.5M239.9,171.3L241.0,170.4M241.0,170.4L242.0,171.3M251.0,169.3L252.0,170.2M252.0,170.2L253.0,170.6L254.0,169.4M254.0,169.4L255.0,168.2M255.0,168.2L256.0,167.1L257.1,167.9L258.2,168.6M258.2,168.6L259.3,168.3M259.3,168.3L260.4,166.6L261.5,165.8M265.5,166.6L266.5,168.1M267.5,169.4L268.5,168.9L269.5,168.5M269.5,168.5L270.5,168.0L271.5,168.5M271.5,168.5L272.5,169.4M274.6,169.6L275.7,169.4L276.7,171.4L277.8,173.4M289.0,173.4L290.0,173.7L291.0,176.0M298.0,175.5L299.0,175.9M299.0,175.9L300.0,177.0M305.0,177.8L306.0,179.4L307.0,179.1M310.1,179.8L311.1,180.8M314.3,180.4L315.4,181.0M326.4,178.6L327.5,177.2M327.5,177.2L328.5,178.8L329.5,179.5M331.5,178.4L332.5,178.3L333.5,179.3M333.5,179.3L334.5,180.2L335.6,180.5M338.6,179.3L339.6,180.4M351.9,172.7L352.9,172.8L353.9,173.3L354.9,173.2M354.9,173.2L355.9,172.0L356.9,171.5M362.0,170.4L363.0,171.9M382.0,167.5L383.1,168.0L384.1,168.3L385.2,167.5M387.3,166.3L388.3,167.2M388.3,167.2L389.3,166.5L390.4,165.8M393.5,166.6L394.5,166.2M394.5,166.2L395.5,165.0M395.5,165.0L396.6,164.6L397.6,164.5M404.8,167.8L405.8,167.7M414.0,161.2L415.0,161.7L416.0,163.7M419.0,166.2L420.0,167.8M421.0,169.5L422.1,170.5M422.1,170.5L423.1,170.0L424.2,169.5L425.2,169.9M430.5,172.3L431.5,173.6L432.6,174.4M434.7,173.6L435.8,174.1L436.8,175.4M436.8,175.4L437.9,175.5M447.4,173.5L448.5,175.3M457.8,171.5L458.9,173.0L459.9,171.9M459.9,171.9L461.0,170.9L462.0,169.8M462.0,169.8L463.0,171.3L464.0,172.9M480.4,172.2L481.4,174.0L482.5,173.9L483.5,173.0M483.5,173.0L484.5,173.7L485.6,174.4M485.6,174.4L486.6,175.0M488.7,173.4L489.7,174.3L490.7,174.9L491.7,174.0M502.8,169.2L503.8,170.8M503.8,170.8L504.8,172.3L505.8,171.5M508.9,170.5L509.9,170.8M523.0,172.4L524.1,173.1L525.2,173.8L526.3,174.4M530.5,175.2L531.5,174.3M539.5,170.5L540.6,170.2L541.7,169.5M555.5,158.8L556.7,156.8L557.8,156.4M566.5,153.3L567.6,154.1L568.6,154.9M571.8,155.2L572.8,157.0M572.8,157.0L573.9,158.8M573.9,158.8L574.9,160.0L575.9,160.2M575.9,160.2L577.0,160.4M596.7,144.4L597.8,140.2M597.8,140.2L598.9,137.6L600.0,134.7M600.0,134.7L601.1,135.0L602.2,135.3M602.2,135.3L603.3,136.7L604.4,138.3L605.5,139.8M611.2,128.5L612.4,126.6L613.5,127.4M613.5,127.4L614.7,128.7L615.8,130.1M618.1,128.3L619.2,130.6M625.4,126.2L626.5,125.3M626.5,125.3L627.5,124.4L628.6,125.3M628.6,125.3L629.6,126.2M630.7,126.4L631.8,126.0L632.8,128.3M632.8,128.3L633.9,130.7M633.9,130.7L635.0,133.1M646.4,113.2L647.5,114.0L648.5,117.6L649.5,120.3M660.2,106.5L661.4,105.3L662.5,103.5M669.7,98.1L670.8,91.9L671.8,86.8L672.8,82.1M672.8,82.1L673.8,86.4M673.8,86.4L674.9,89.4L676.0,92.4M676.0,92.4L677.0,95.7L678.1,94.3M686.6,81.2L687.6,83.5M687.6,83.5L688.7,85.8L689.7,86.5M689.7,86.5L690.7,87.4L691.8,88.8M691.8,88.8L692.8,90.2L693.8,90.9M694.9,91.5L695.9,92.4L696.9,95.7L698.0,99.0M704.1,86.9L705.2,88.9M708.3,92.9L709.3,91.2L710.4,89.5M714.7,84.1L715.7,81.5M723.7,59.9L724.7,60.8L725.8,61.6M725.8,61.6L726.8,62.4L727.9,62.4M728.9,62.3L729.9,63.8L731.0,65.2L732.0,65.9M739.4,61.7L740.4,60.8L741.5,60.8L742.5,60.7M745.7,57.8L746.7,57.3M748.8,56.0L749.8,54.7L750.8,56.1M759.0,55.6L760.0,57.2M760.0,57.2L761.0,58.8M764.0,59.3L765.0,59.9L766.0,61.4L767.0,62.5M767.0,62.5L768.0,62.5L769.4,63.7L770.7,66.4M772.8,65.4L773.8,63.8L774.9,62.4M780.0,58.3L781.0,58.9L782.1,59.6M790.4,57.3L791.4,59.2L792.5,59.3M796.7,55.9L797.7,56.3M799.8,53.3L800.9,52.1L801.9,52.1M801.9,52.1L803.0,52.2L804.0,52.3L805.1,50.8M808.4,51.1L809.5,51.9M815.2,57.9L816.4,58.8L817.5,59.0M822.7,50.8L823.7,50.8L824.8,51.7M830.1,53.0L831.2,55.6L832.3,57.6M832.3,57.6L833.4,59.6L834.5,62.9M834.5,62.9L835.6,66.5M835.6,66.5L836.7,68.6M836.7,68.6L837.8,66.0M849.1,59.1L850.1,60.3L851.2,61.5M851.2,61.5L852.2,65.3L853.2,69.1M854.4,68.9L855.5,68.5L856.7,68.7M856.7,68.7L857.8,71.0L859.0,71.0M862.2,68.1L863.2,67.1M863.2,67.1L864.2,65.5L865.2,64.4M865.2,64.4L866.2,63.3M872.2,63.2L873.2,64.7L874.2,65.3L875.2,63.9M877.3,64.2L878.4,65.5L879.4,65.5M885.8,65.1L886.9,65.7M886.9,65.7L887.9,68.0L889.0,68.2L890.0,66.5M890.0,66.5L891.0,65.1M892.1,65.0L893.1,64.9L894.1,64.1L895.2,61.7M895.2,61.7L896.2,60.6L897.2,62.2M901.3,61.4L902.4,63.1M902.4,63.1L903.4,64.4M905.5,61.3L906.5,62.3M906.5,62.3L907.5,63.4M925.3,48.9L926.4,48.6L927.5,48.2L928.6,49.9M928.6,49.9L929.7,51.7L930.8,53.5M930.8,53.5L931.9,57.0L933.0,60.4M933.0,60.4L934.1,60.9M936.2,58.7L937.2,58.6L938.3,59.7L939.3,58.5M947.7,56.0L948.7,57.1L949.7,56.9L950.7,56.4M952.7,56.8L953.7,58.8L954.7,59.2M955.7,59.0L956.7,58.9" stroke="#2a8af2"/>
<path d="M8.0,154.0L9.0,152.9L10.0,153.2M10.0,153.2L11.0,153.7M13.0,154.1L14.0,153.4M38.0,148.3L39.1,148.0L40.1,147.6M40.1,147.6L41.2,146.9M43.3,146.4L44.4,146.8L45.4,146.1M45.4,146.1L46.5,145.6M47.5,145.6L48.6,146.4M48.6,146.4L49.7,147.2L50.7,146.6L51.8,146.4M52.9,148.6L53.9,147.9M59.0,150.0L60.0,150.0L61.0,149.8M62.0,149.6L63.0,150.3M66.0,152.4L67.0,152.0M77.9,171.8L79.0,172.5M79.0,172.5L80.2,171.4L81.3,171.3L82.5,173.1M94.2,157.4L95.3,157.4M106.2,164.6L107.3,164.7M107.3,164.7L108.4,164.5L109.5,164.3M109.5,164.3L110.5,165.0M113.7,166.3L114.8,166.3L115.8,166.7M118.9,168.2L120.0,167.7L121.0,169.0M128.6,174.9L129.6,175.0M133.7,179.7L134.7,179.7M146.3,167.9L147.3,168.1M165.0,172.3L166.0,172.0M167.0,172.8L168.0,172.9M170.0,171.1L171.0,170.2L172.0,171.2L173.0,171.7M177.0,169.6L178.0,170.5L179.0,170.5L180.0,170.2M191.0,172.0L192.0,170.9L193.0,170.8L194.0,171.7M194.0,171.7L195.0,172.1L196.0,171.3M197.0,170.5L198.0,170.9M198.0,170.9L199.0,172.3L200.0,171.2M203.0,173.6L204.0,173.0M204.0,173.0L205.0,171.8L206.0,172.4M220.2,176.7L221.2,176.4M227.6,175.4L228.6,174.8M242.0,171.3L243.0,172.1M243.0,172.1L244.0,172.1M244.0,172.1L245.0,172.1M272.5,169.4L273.6,170.4L274.6,169.6M277.8,173.4L278.8,173.5L279.9,173.7L280.9,174.1M280.9,174.1L282.0,174.6L283.0,174.4M283.0,174.4L284.0,174.4M284.0,174.4L285.0,174.4L286.0,174.5M293.0,175.0L294.0,175.7M294.0,175.7L295.0,176.3L296.0,176.1L297.0,175.6M311.1,180.8L312.2,180.7L313.2,179.9L314.3,180.4M317.5,180.6L318.5,180.2L319.6,180.6L320.6,181.1M329.5,179.5L330.5,179.0M330.5,179.0L331.5,178.4M339.6,180.4L340.6,181.5L341.6,180.3M356.9,171.5L357.9,171.7M357.9,171.7L359.0,171.9M361.0,170.8L362.0,170.4M365.0,169.8L366.0,169.1M366.0,169.1L367.1,168.8L368.2,168.6M370.4,165.8L371.5,165.2L372.6,165.8M372.6,165.8L373.6,166.4L374.7,166.4L375.7,165.8M375.7,165.8L376.8,165.1L377.8,166.0M378.9,167.0L379.9,167.9L381.0,167.8L382.0,167.5M401.7,167.6L402.7,168.5L403.8,168.9L404.8,167.8M405.8,167.7L406.8,168.0M418.0,166.3L419.0,166.2M427.3,171.8L428.4,171.5L429.4,170.9L430.5,172.3M437.9,175.5L438.9,175.2L440.0,175.0L441.1,175.0M441.1,175.0L442.1,175.2L443.2,175.5M445.3,173.7L446.4,172.7L447.4,173.5M452.7,173.4L453.7,173.1M453.7,173.1L454.7,172.8M465.1,172.4L466.1,171.9M466.1,171.9L467.1,172.0M467.1,172.0L468.1,172.2M468.1,172.2L469.1,172.4L470.1,172.3M473.2,174.7L474.2,174.2M476.3,174.2L477.3,174.9M492.7,172.6L493.7,172.2L494.7,172.6L495.7,172.9M506.9,170.7L507.9,170.2L508.9,170.5M509.9,170.8L511.0,171.1L512.0,171.4M512.0,171.4L513.0,172.1M514.0,173.1L515.0,173.6L516.0,172.9M516.0,172.9L517.0,172.1M517.0,172.1L518.0,172.0M519.0,173.0L520.0,174.0L521.0,173.3M522.0,172.1L523.0,172.4M526.3,174.4L527.4,175.1M527.4,175.1L528.5,175.5M532.5,173.5L533.5,172.6L534.5,173.2M550.1,162.9L551.2,163.0L552.2,163.5M557.8,156.4L559.0,156.1M561.2,153.0L562.2,152.3L563.3,153.8M568.6,154.9L569.7,154.1L570.7,154.1L571.8,155.2M584.4,156.4L585.5,156.6L586.7,156.8M615.8,130.1L616.9,129.7M629.6,126.2L630.7,126.4M658.0,106.1L659.1,107.8L660.2,106.5M681.3,89.4L682.3,88.7M693.8,90.9L694.9,91.5M750.8,56.1L751.9,58.1L752.9,57.6L753.9,56.2M774.9,62.4L775.9,62.5L776.9,62.5M784.1,56.6L785.2,56.3L786.2,56.5L787.2,56.8M787.2,56.8L788.2,57.5M788.2,57.5L789.3,57.2L790.4,57.3M794.6,56.1L795.6,55.5L796.7,55.9M805.1,50.8L806.2,50.1L807.3,50.3M853.2,69.1L854.4,68.9M859.0,71.0L860.1,70.5M875.2,63.9L876.3,62.8L877.3,64.2M879.4,65.5L880.5,64.8L881.6,65.4M897.2,62.2L898.2,61.9M898.2,61.9L899.3,61.1L900.3,60.3L901.3,61.4M915.8,59.7L916.8,59.7M918.9,55.5L919.9,53.3L921.0,54.6L922.0,54.7M941.4,56.6L942.5,57.5L943.5,58.0L944.6,56.6M944.6,56.6L945.6,55.2L946.7,54.9L947.7,56.0M954.7,59.2L955.7,59.0M956.7,58.9L957.7,59.6L958.7,60.4L959.8,59.3" stroke="#e6da6e"/>
</g>
<path clip-path="url(#c3)" d="M6.4,509.8L7.4,509.1L8.4,508.5L9.5,509.0L10.5,510.2L11.5,511.4L12.6,511.9L13.6,512.3L14.6,512.1L15.7,511.4L16.8,510.6L17.9,509.8L19.0,509.0L20.1,510.1L21.2,511.2L22.3,511.9L23.4,510.0L24.5,507.5L25.6,507.4L26.7,507.3L27.8,502.0L28.9,501.5L30.1,502.8L31.2,501.4L32.3,500.0L33.5,500.4L34.6,498.5L35.7,499.9L36.9,501.7L38.0,505.7L39.1,506.7L40.2,505.7L41.3,505.0L42.5,506.9L43.6,505.5L44.7,504.1L45.8,505.6L46.9,505.7L47.9,504.0L49.0,504.6L50.0,505.3L51.1,505.7L52.1,504.4L53.2,503.2L54.2,504.2L55.7,503.7L57.1,499.6L58.3,500.6L59.5,501.9L60.6,502.2L61.8,499.9L63.0,502.0L64.1,505.1L65.2,504.3L66.3,503.5L67.5,503.7L68.6,505.5L69.7,507.2L70.8,517.6L71.8,526.8L72.9,523.9L74.0,523.1L75.1,522.3L76.2,517.7L77.3,521.2L78.3,524.8L79.4,521.6L80.5,522.0L81.6,520.6L82.8,518.7L83.9,512.1L85.0,510.2L86.1,511.0L87.2,510.9L88.3,510.4L89.3,510.5L90.4,510.6L91.5,509.8L92.6,508.1L93.7,507.6L94.8,509.2L95.9,507.3L97.0,508.3L98.1,509.8L99.2,508.9L100.3,508.5L101.4,509.8L102.5,511.0L103.6,511.0L104.7,510.5L105.8,511.9L106.9,513.5L108.0,514.1L109.1,512.8L110.2,512.4L111.3,513.9L112.4,513.6L113.4,512.8L114.5,515.5L115.6,516.4L116.6,516.7L117.7,517.0L118.7,517.5L119.8,517.4L120.9,515.7L121.9,516.3L123.0,517.8L124.0,517.1L125.1,514.5L126.1,512.0L127.2,510.8L128.2,510.5L129.3,510.2L130.3,508.0L131.4,509.7L132.5,513.0L133.6,516.4L134.7,517.6L135.9,513.9L137.1,512.7L138.2,511.6L139.4,507.4L140.6,505.5L142.1,512.0L143.5,516.7L144.5,514.6L145.6,512.8L146.6,513.1L147.6,513.3L148.7,513.3L149.7,511.1L150.7,509.0L151.7,509.6L152.8,508.2L153.8,507.2L155.0,507.2L156.1,505.5L157.3,503.1L158.4,502.0L159.6,500.9L160.7,501.1L161.8,501.1L162.9,501.1L164.0,502.8L165.1,504.7L166.2,504.6L167.3,503.8L168.4,503.2L169.6,504.0L170.8,502.4L171.9,499.3L173.1,497.6L174.3,496.9L175.4,499.9L176.5,501.4L177.6,502.8L178.7,505.9L180.1,499.2L181.1,498.4L182.1,497.5L183.1,497.6L184.2,499.9L185.2,498.5L186.2,497.3L187.2,498.0L188.2,498.6L189.2,497.9L190.3,496.8L191.3,498.2L192.3,498.4L193.3,497.3L194.4,496.5L195.4,497.3L196.5,498.1L197.6,498.5L198.6,497.6L199.7,496.7L200.7,497.7L201.8,498.6L202.9,498.1L203.9,497.7L205.0,497.3L206.1,497.4L207.1,497.5L208.2,497.5L209.3,497.2L210.4,497.4L211.4,498.2L212.5,498.9L213.6,498.1L214.7,495.9L215.7,497.7L216.8,499.5L217.9,500.1L219.0,499.3L220.1,500.6L221.2,501.7L222.2,501.3L223.3,500.8L224.4,501.4L225.5,502.7L226.6,501.7L227.7,501.3L228.8,502.1L229.9,501.9L231.0,499.7L232.1,499.7L233.2,499.8L234.3,498.3L235.4,495.7L236.5,494.7L237.6,495.7L238.7,494.1L239.8,491.9L240.9,493.0L242.0,490.9L243.1,489.5L244.2,490.5L245.2,491.5L246.3,491.4L247.4,490.2L248.5,491.8L249.6,493.3L250.6,492.3L251.7,492.9L252.8,495.0L253.8,497.1L254.9,494.6L256.0,493.4L257.1,496.5L258.2,498.5L259.3,497.9L260.4,498.8L261.4,498.9L262.5,499.0L263.5,497.6L264.6,495.9L265.6,495.2L266.7,495.2L267.7,495.0L268.8,493.4L269.9,492.0L271.0,492.6L272.1,493.3L273.2,493.6L274.3,492.0L275.4,490.4L276.5,491.3L277.5,492.2L278.6,491.1L279.6,490.8L280.7,492.6L281.7,492.6L282.8,492.3L283.8,492.8L284.8,491.6L285.8,488.6L286.8,485.5L287.8,486.8L288.8,487.8L289.9,487.0L290.9,486.1L291.9,487.1L292.9,488.2L293.9,488.5L295.0,487.5L296.0,488.3L297.0,490.6L298.1,491.9L299.2,490.4L300.3,489.0L301.4,489.9L302.5,491.3L303.6,492.8L304.7,491.3L305.8,492.7L306.9,494.8L307.9,494.5L309.0,493.0L310.1,494.6L311.1,496.2L312.2,496.0L313.2,495.9L314.3,496.5L315.4,498.4L316.4,499.0L317.5,498.3L318.5,496.7L319.6,497.6L320.6,498.2L321.6,496.8L322.6,495.4L323.7,495.2L324.7,496.7L325.7,498.2L326.8,496.2L327.8,493.3L328.8,495.7L329.8,495.7L330.8,495.0L331.9,495.4L332.9,496.4L333.9,496.5L334.9,495.5L335.9,494.6L336.9,494.8L338.0,496.2L339.0,496.7L340.0,497.1L341.0,498.7L342.0,499.8L343.1,497.3L344.1,497.5L345.2,498.8L346.2,498.1L347.3,496.9L348.3,496.5L349.3,498.2L350.4,497.8L351.4,496.4L352.5,494.9L353.5,495.6L354.6,496.4L355.6,496.3L356.7,494.6L357.8,495.8L358.9,495.1L360.0,493.2L361.1,494.0L362.2,492.9L363.3,491.2L364.4,491.0L365.5,492.3L366.5,489.4L367.6,490.1L368.6,490.9L369.7,490.2L370.7,488.9L371.8,487.9L372.8,488.7L373.9,489.5L374.9,489.5L376.0,488.2L377.1,487.4L378.2,489.8L379.3,493.0L380.4,491.0L381.6,488.9L382.7,490.7L383.8,490.8L384.9,489.7L385.9,488.3L386.9,489.0L388.0,489.1L389.0,488.0L390.0,487.3L391.0,487.0L392.0,486.3L393.1,484.5L394.1,482.8L395.1,482.7L396.2,485.1L397.3,483.6L398.4,485.4L399.5,487.6L401.0,472.6L402.0,473.8L403.1,473.7L404.1,471.1L405.2,471.0L406.2,473.4L407.3,471.5L408.3,471.4L409.5,472.7L410.7,473.9L411.8,473.5L413.0,473.1L414.2,473.4L415.4,475.5L416.5,477.6L417.7,477.6L418.8,479.3L420.0,481.7L421.1,481.2L422.1,479.4L423.2,477.9L424.3,479.4L425.3,480.8L426.4,482.2L427.4,481.6L428.5,480.9L429.6,480.5L430.6,481.2L431.7,482.0L432.8,481.3L433.8,480.3L434.8,479.7L435.9,480.7L436.9,481.8L438.0,481.6L439.0,480.2L440.1,478.8L441.1,479.4L442.2,480.5L443.2,481.0L444.3,479.9L445.3,478.8L446.4,479.6L447.4,480.6L448.5,481.0L449.5,481.0L450.6,480.9L451.6,479.9L452.7,479.2L453.7,480.1L454.7,481.0L455.8,481.3L456.8,480.6L457.9,480.0L458.9,480.6L460.0,482.0L461.0,481.3L462.2,479.5L463.4,478.8L464.5,478.7L465.7,478.5L466.9,476.3L467.9,475.7L468.9,476.4L470.0,476.9L471.0,477.2L472.0,478.1L473.0,479.1L474.1,478.1L475.1,478.5L476.1,479.8L477.1,481.2L478.2,481.2L479.2,481.0L480.2,481.9L481.2,482.1L482.3,481.4L483.3,480.8L484.3,482.0L485.3,482.6L486.4,482.0L487.4,481.4L488.5,481.6L489.5,482.3L490.6,483.1L491.7,481.9L492.7,480.1L493.8,481.2L494.8,481.7L495.9,479.5L497.0,480.1L498.0,480.7L499.1,480.7L500.2,479.9L501.2,479.0L502.3,479.0L503.4,480.2L504.5,481.1L505.6,480.7L506.6,480.3L507.7,480.5L508.8,483.1L509.9,482.8L510.9,482.5L512.0,482.2L513.1,482.6L514.2,482.9L515.3,482.1L516.4,481.2L517.5,480.7L518.6,480.6L519.7,480.4L520.8,480.3L522.0,479.6L523.1,478.6L524.3,477.8L525.4,477.2L526.6,477.2L527.8,480.3L529.0,481.8L530.1,482.1L531.3,483.8L532.5,486.3L533.5,485.3L534.6,483.7L535.6,483.1L536.7,483.5L537.7,483.8L538.8,482.2L539.8,480.3L541.0,481.7L542.2,480.0L543.3,477.7L544.5,475.9L545.7,474.7L546.7,475.3L547.8,476.0L548.8,477.0L549.9,477.7L550.9,477.0L552.0,476.5L553.0,478.1L554.0,478.6L555.1,477.4L556.1,475.7L557.2,473.9L558.2,474.2L559.3,473.8L560.3,472.3L561.4,470.5L562.4,469.4L563.5,469.1L564.5,468.7L565.6,466.8L566.6,464.8L567.7,463.9L568.8,465.2L569.9,465.9L571.0,464.6L572.0,465.3L573.1,467.1L574.2,467.1L575.3,465.9L576.4,464.7L577.6,466.0L578.8,467.8L579.9,465.9L581.1,463.4L582.3,462.5L583.3,466.1L584.4,468.4L585.4,467.3L586.5,468.3L587.5,469.9L588.6,469.9L589.6,469.9L590.7,469.4L591.8,467.9L592.9,464.6L594.0,463.3L595.2,462.7L596.4,459.7L597.5,455.5L598.7,451.4L599.9,450.7L601.3,453.8L602.8,455.1L603.9,453.6L605.0,452.7L606.1,451.4L607.2,449.1L608.3,447.7L609.4,447.5L610.5,446.2L611.6,443.9L612.6,444.9L613.6,445.8L614.7,445.3L615.7,443.8L616.7,444.4L617.7,445.2L618.7,445.0L619.8,444.2L620.8,443.5L621.8,444.5L622.9,447.4L624.0,449.5L625.1,449.3L626.2,450.3L627.3,451.4L628.3,452.5L629.4,454.1L630.4,455.8L631.5,457.6L632.5,458.9L633.6,458.8L634.6,458.0L635.7,459.2L636.7,457.5L637.8,455.7L638.8,454.8L639.9,455.0L640.9,454.2L642.3,446.1L643.8,440.2L644.8,440.6L645.9,440.5L646.9,439.8L648.0,439.0L649.0,439.8L650.1,441.8L651.1,441.0L652.2,439.0L653.3,437.8L654.4,437.8L655.5,436.8L656.6,438.0L657.8,439.2L658.9,440.0L660.0,440.0L661.2,437.7L662.3,436.7L663.5,436.6L664.6,436.2L665.8,433.9L666.9,430.3L668.0,427.6L669.1,424.3L670.3,420.2L671.4,417.2L672.5,415.1L673.6,418.9L674.7,420.2L675.8,422.2L676.8,425.9L677.9,429.5L679.0,431.2L680.1,431.6L681.2,432.7L682.3,433.7L683.4,433.3L684.4,432.6L685.5,435.0L686.6,436.5L687.7,434.9L688.8,432.3L689.9,432.6L691.0,433.5L692.1,431.7L693.2,429.5L694.3,430.2L695.4,430.0L696.5,427.4L697.6,427.3L698.6,427.3L699.7,425.7L700.7,423.0L701.8,421.3L702.8,420.8L703.9,420.2L704.9,419.8L706.0,419.9L707.0,422.3L708.1,421.3L709.1,420.5L710.2,422.9L711.2,423.5L712.3,421.0L713.4,420.7L714.5,420.9L715.6,419.2L716.7,417.6L717.8,417.0L718.9,417.3L720.0,415.2L721.2,408.0L722.3,402.9L723.5,396.7L724.5,395.0L725.5,395.4L726.6,397.5L727.6,399.7L728.6,399.9L729.7,399.6L730.7,400.9L731.7,402.8L732.9,400.7L734.0,398.9L735.2,399.6L736.3,397.6L737.5,395.6L738.5,395.4L739.6,395.6L740.6,395.9L741.7,396.2L742.8,396.4L743.8,396.7L744.9,397.8L745.9,399.1L747.0,398.8L748.0,397.9L749.1,397.1L750.1,397.8L751.2,399.0L752.2,400.0L753.7,401.6L755.1,406.0L756.1,404.8L757.2,402.3L758.2,399.9L759.3,397.8L760.5,399.8L761.7,401.9L762.8,402.7L764.0,402.9L765.2,404.9L766.3,408.4L767.4,409.5L768.5,409.7L769.6,412.7L770.8,415.0L771.9,412.5L773.1,410.0L774.2,410.4L775.4,411.1L776.5,409.9L777.6,408.1L778.7,406.7L779.8,406.4L780.9,407.1L782.0,405.8L783.1,404.8L784.2,406.7L785.3,408.6L786.4,407.8L787.5,406.0L788.6,404.2L789.6,405.6L790.7,407.0L791.7,408.0L792.7,407.2L793.8,406.4L794.8,407.7L795.8,409.5L796.8,408.2L797.9,407.0L798.9,405.8L800.1,409.2L801.2,412.9L802.4,414.8L803.5,415.7L804.7,417.1L805.9,417.0L807.1,416.8L808.2,415.2L809.4,414.4L810.6,414.8L811.7,416.5L812.8,416.8L813.9,417.0L815.0,419.7L816.2,419.4L817.3,416.1L818.5,414.2L819.6,413.3L820.8,409.3L821.8,410.0L822.8,411.1L823.9,412.2L824.9,412.2L825.9,412.0L826.9,412.2L827.9,413.8L829.0,413.1L830.0,413.3L831.0,414.7L832.0,416.2L833.0,416.6L834.0,417.5L835.0,420.0L836.0,421.1L837.0,422.3L838.2,423.1L839.3,423.5L840.5,421.3L841.6,421.0L842.8,421.3L844.0,422.1L845.2,421.8L846.3,421.4L847.5,424.1L848.7,425.2L849.9,423.5L851.0,426.0L852.2,428.6L853.3,430.3L854.5,431.9L855.7,432.5L856.9,433.2L858.0,433.5L859.2,433.0L860.4,432.6L861.6,432.7L862.7,431.6L863.9,429.3L865.0,429.2L866.2,428.7L867.3,427.6L868.3,426.5L869.4,426.8L870.5,428.2L871.6,428.5L872.6,427.8L873.7,427.1L874.8,427.6L875.9,428.4L876.9,428.7L878.0,427.8L879.1,426.8L880.1,428.0L881.2,429.2L882.3,430.2L883.3,429.0L884.4,427.8L885.4,426.8L886.5,428.1L887.6,429.3L888.6,429.8L889.7,428.8L890.8,427.3L891.8,427.4L892.9,427.3L894.0,425.3L895.0,425.2L896.1,426.2L897.1,425.4L898.2,424.1L899.3,422.9L900.3,422.1L901.4,421.2L902.5,421.3L903.5,422.0L904.6,423.2L905.7,423.8L906.7,422.2L907.8,422.4L908.8,423.9L909.9,422.4L911.0,420.9L912.0,422.3L913.1,423.5L914.1,422.1L915.2,420.8L916.2,419.8L917.2,419.6L918.2,419.5L919.3,419.2L920.3,418.8L921.3,418.3L922.4,418.5L923.4,418.0L924.5,415.3L925.5,412.7L926.6,411.4L927.7,411.3L928.7,412.7L929.7,413.8L930.7,415.0L932.2,419.6L933.6,423.3L934.7,422.2L935.8,423.4L936.9,423.9L938.0,422.2L939.1,420.4L940.2,419.5L941.3,419.2L942.4,417.9L943.5,416.0L944.5,417.6L945.6,419.3L946.7,419.6L947.7,418.0L948.8,418.3L949.8,418.9L950.9,419.1L952.0,417.9L953.0,417.7L954.1,420.4L955.5,420.3L957.0,415.0L958.1,414.8L959.2,415.1L960.3,415.3L961.4,414.6L962.5,413.9L963.6,414.0L964.7,414.5L965.8,413.0L967.2,417.4L968.7,420.7L969.3,408.0" fill="none" stroke="#ff0c0c" stroke-width="1.85" stroke-linejoin="round"/>
<g clip-path="url(#c2)">
<path d="M25.8,229.8h1.7v1.6h-1.7ZM67.4,233.8h1.7v1.6h-1.7ZM79.6,226.8h1.7v1.6h-1.7ZM94.0,242.0h1.7v1.6h-1.7ZM100.0,239.0h1.7v1.6h-1.7ZM114.0,236.0h1.7v1.6h-1.7ZM124.5,253.0h1.7v3.0h-1.7ZM135.0,268.0h1.7v1.6h-1.7ZM145.7,256.0h1.7v1.6h-1.7ZM148.8,259.0h1.7v1.6h-1.7ZM162.5,289.0h1.7v1.6h-1.7ZM179.0,286.0h1.7v9.0h-1.7ZM186.8,290.5h1.7v1.6h-1.7ZM197.0,292.0h1.7v1.6h-1.7ZM203.5,296.6h1.7v1.6h-1.7ZM218.6,295.0h1.7v1.6h-1.7ZM224.7,292.0h1.7v1.6h-1.7ZM237.0,301.0h1.7v1.6h-1.7ZM255.0,301.0h1.7v1.6h-1.7ZM259.7,286.0h1.7v6.0h-1.7ZM270.4,301.0h1.7v1.6h-1.7ZM276.4,308.8h1.7v1.6h-1.7ZM290.0,328.5h1.7v1.6h-1.7ZM297.7,327.0h1.7v8.0h-1.7ZM300.7,331.0h1.7v1.6h-1.7ZM303.8,334.0h1.7v1.6h-1.7ZM309.8,324.0h1.7v1.6h-1.7ZM317.4,313.4h1.7v1.6h-1.7ZM325.0,322.4h1.7v6.0h-1.7ZM352.4,308.8h1.7v1.6h-1.7ZM398.0,325.5h1.7v6.0h-1.7ZM413.0,336.0h1.7v1.6h-1.7ZM426.8,342.0h1.7v1.6h-1.7ZM437.4,349.8h1.7v6.0h-1.7ZM452.6,346.8h1.7v1.6h-1.7ZM466.2,352.8h1.7v1.6h-1.7ZM476.8,351.0h1.7v1.6h-1.7ZM483.0,343.7h1.7v1.6h-1.7ZM484.6,343.7h1.7v1.6h-1.7ZM487.6,346.7h1.7v1.6h-1.7ZM501.3,342.0h1.7v1.6h-1.7ZM505.8,346.7h1.7v1.6h-1.7ZM513.4,342.0h1.7v1.6h-1.7ZM518.0,342.0h1.7v1.6h-1.7ZM528.6,342.0h1.7v4.0h-1.7ZM537.7,337.6h1.7v1.6h-1.7ZM554.4,328.5h1.7v1.6h-1.7ZM556.0,327.0h1.7v1.6h-1.7ZM560.5,330.0h1.7v1.6h-1.7ZM569.6,343.7h1.7v1.6h-1.7ZM589.3,337.6h1.7v1.6h-1.7ZM595.4,337.6h1.7v1.6h-1.7ZM601.5,334.6h1.7v1.6h-1.7ZM618.2,337.6h1.7v1.6h-1.7ZM621.2,331.5h1.7v1.6h-1.7ZM639.4,305.7h1.7v1.6h-1.7ZM641.0,317.9h1.7v1.6h-1.7ZM645.5,313.4h1.7v1.6h-1.7ZM662.2,301.0h1.7v1.6h-1.7ZM689.5,269.0h1.7v1.6h-1.7ZM695.6,289.0h1.7v1.6h-1.7ZM701.7,311.8h1.7v1.6h-1.7ZM713.8,310.3h1.7v1.6h-1.7ZM720.0,313.4h1.7v1.6h-1.7ZM739.7,307.2h1.7v1.6h-1.7ZM741.3,304.2h1.7v1.6h-1.7ZM748.8,301.0h1.7v3.0h-1.7ZM752.0,295.0h1.7v1.6h-1.7ZM753.4,289.0h1.7v7.0h-1.7ZM762.5,290.0h1.7v1.6h-1.7ZM773.0,284.5h1.7v1.6h-1.7ZM776.2,284.5h1.7v1.6h-1.7ZM779.2,287.5h1.7v1.6h-1.7ZM782.3,278.4h1.7v1.6h-1.7ZM785.3,277.0h1.7v1.6h-1.7ZM790.0,277.0h1.7v1.6h-1.7ZM793.0,273.8h1.7v1.6h-1.7ZM816.6,248.0h1.7v1.6h-1.7ZM824.8,252.6h1.7v1.6h-1.7ZM833.9,252.0h1.7v1.6h-1.7ZM837.0,260.0h1.7v1.6h-1.7ZM841.5,252.0h1.7v1.6h-1.7ZM849.0,238.0h1.7v1.6h-1.7ZM870.3,242.0h1.7v1.6h-1.7ZM888.5,248.0h1.7v1.6h-1.7ZM894.6,248.0h1.7v1.6h-1.7ZM905.2,249.5h1.7v1.6h-1.7ZM906.8,242.0h1.7v1.6h-1.7ZM914.3,243.4h1.7v1.6h-1.7ZM929.5,242.0h1.7v1.6h-1.7ZM951.0,252.6h1.7v1.6h-1.7ZM954.0,254.0h1.7v1.6h-1.7ZM969.0,258.0h1.7v1.6h-1.7Z" fill="#d8cc68"/>
<path d="M35.0,220.7h1.7v1.6h-1.7ZM57.0,233.8h1.7v1.6h-1.7ZM76.0,239.0h1.7v12.0h-1.7ZM88.0,236.0h1.7v7.0h-1.7ZM91.0,234.4h1.7v12.0h-1.7ZM103.0,240.0h1.7v3.0h-1.7ZM131.0,262.0h1.7v3.0h-1.7ZM142.7,252.6h1.7v10.0h-1.7ZM160.3,281.0h1.7v6.0h-1.7ZM167.0,267.8h1.7v3.0h-1.7ZM170.0,284.0h1.7v1.6h-1.7ZM173.0,292.0h1.7v5.0h-1.7ZM176.0,267.8h1.7v22.0h-1.7ZM244.5,308.8h1.7v1.6h-1.7ZM247.0,306.0h1.7v4.0h-1.7ZM259.7,278.4h1.7v5.0h-1.7ZM306.8,325.0h1.7v8.0h-1.7ZM322.0,316.4h1.7v5.0h-1.7ZM331.0,316.4h1.7v5.0h-1.7ZM340.0,316.4h1.7v3.0h-1.7ZM367.5,298.0h1.7v6.0h-1.7ZM372.0,299.6h1.7v6.0h-1.7ZM378.0,302.7h1.7v9.0h-1.7ZM388.8,305.7h1.7v5.0h-1.7ZM396.4,324.0h1.7v7.0h-1.7ZM407.0,349.8h1.7v1.6h-1.7ZM429.8,337.6h1.7v1.6h-1.7ZM446.5,351.0h1.7v9.0h-1.7ZM457.0,345.3h1.7v1.6h-1.7ZM461.7,337.6h1.7v1.6h-1.7ZM531.6,337.6h1.7v1.6h-1.7ZM543.8,342.0h1.7v1.6h-1.7ZM546.8,337.6h1.7v5.0h-1.7ZM572.6,343.7h1.7v4.0h-1.7ZM578.7,345.3h1.7v4.0h-1.7ZM613.6,337.6h1.7v10.0h-1.7ZM622.7,317.9h1.7v10.0h-1.7ZM624.2,308.8h1.7v6.0h-1.7ZM631.8,292.0h1.7v12.0h-1.7ZM644.0,321.0h1.7v3.0h-1.7ZM648.5,321.0h1.7v3.0h-1.7ZM654.6,308.8h1.7v4.0h-1.7ZM674.3,310.3h1.7v1.6h-1.7ZM679.0,292.0h1.7v3.0h-1.7ZM680.4,276.9h1.7v6.0h-1.7ZM683.5,276.9h1.7v1.6h-1.7ZM686.5,264.7h1.7v8.0h-1.7ZM728.5,310.3h1.7v5.0h-1.7ZM753.4,284.5h1.7v8.0h-1.7ZM765.0,284.5h1.7v1.6h-1.7ZM798.4,270.8h1.7v1.6h-1.7ZM799.0,263.0h1.7v5.0h-1.7ZM799.6,252.6h1.7v8.0h-1.7ZM803.5,237.4h1.7v11.0h-1.7ZM805.6,231.3h1.7v8.0h-1.7ZM884.0,241.0h1.7v1.6h-1.7ZM897.6,242.0h1.7v1.6h-1.7ZM920.4,240.0h1.7v3.0h-1.7ZM967.5,248.0h1.7v3.0h-1.7Z" fill="#ff1818"/>
<path d="M54.7,234.4h1.7v6.0h-1.7ZM71.4,213.0h1.7v14.0h-1.7ZM72.9,222.0h1.7v12.0h-1.7ZM74.4,234.4h1.7v10.0h-1.7ZM83.5,234.4h1.7v16.0h-1.7ZM85.0,246.5h1.7v5.0h-1.7ZM108.0,240.0h1.7v4.0h-1.7ZM120.0,242.0h1.7v6.0h-1.7ZM130.6,264.7h1.7v10.0h-1.7ZM139.7,272.0h1.7v4.0h-1.7ZM154.9,257.0h1.7v18.0h-1.7ZM158.0,275.0h1.7v6.0h-1.7ZM168.5,275.0h1.7v1.6h-1.7ZM182.0,290.5h1.7v4.0h-1.7ZM192.8,283.0h1.7v9.0h-1.7ZM200.4,298.0h1.7v4.0h-1.7ZM212.6,295.0h1.7v4.0h-1.7ZM229.3,292.0h1.7v7.0h-1.7ZM241.4,304.2h1.7v10.0h-1.7ZM249.0,308.8h1.7v1.6h-1.7ZM243.0,304.0h1.7v8.0h-1.7ZM264.3,295.0h1.7v6.0h-1.7ZM281.0,311.8h1.7v9.0h-1.7ZM285.5,324.0h1.7v15.0h-1.7ZM294.7,328.5h1.7v4.0h-1.7ZM314.4,315.0h1.7v7.0h-1.7ZM328.0,318.0h1.7v8.0h-1.7ZM335.6,318.0h1.7v5.0h-1.7ZM347.8,305.7h1.7v5.0h-1.7ZM357.0,308.8h1.7v1.6h-1.7ZM361.5,305.7h1.7v8.0h-1.7ZM382.7,310.0h1.7v9.0h-1.7ZM393.4,310.3h1.7v26.0h-1.7ZM401.0,343.7h1.7v18.0h-1.7ZM404.0,348.0h1.7v9.0h-1.7ZM416.0,330.0h1.7v7.0h-1.7ZM422.3,349.8h1.7v6.0h-1.7ZM432.9,345.3h1.7v7.0h-1.7ZM442.0,352.8h1.7v6.0h-1.7ZM470.8,348.0h1.7v5.0h-1.7ZM524.0,346.7h1.7v7.0h-1.7ZM550.0,334.6h1.7v1.6h-1.7ZM565.0,334.6h1.7v10.0h-1.7ZM575.7,346.7h1.7v1.6h-1.7ZM581.7,343.7h1.7v1.6h-1.7ZM584.8,337.6h1.7v1.6h-1.7ZM586.3,334.6h1.7v4.0h-1.7ZM592.4,343.7h1.7v3.0h-1.7ZM627.0,301.0h1.7v8.0h-1.7ZM628.8,307.2h1.7v7.0h-1.7ZM633.3,296.6h1.7v10.0h-1.7ZM653.0,302.7h1.7v1.6h-1.7ZM659.1,301.0h1.7v6.0h-1.7ZM665.2,302.7h1.7v5.0h-1.7ZM668.3,316.4h1.7v1.6h-1.7ZM692.6,281.4h1.7v9.0h-1.7ZM697.1,298.0h1.7v5.0h-1.7ZM698.7,308.8h1.7v1.6h-1.7ZM709.3,305.7h1.7v2.0h-1.7ZM724.6,310.3h1.7v2.0h-1.7ZM756.4,292.0h1.7v3.0h-1.7ZM759.5,295.0h1.7v5.0h-1.7ZM767.0,278.4h1.7v8.0h-1.7ZM802.0,246.5h1.7v4.0h-1.7ZM808.0,243.4h1.7v4.0h-1.7ZM811.0,242.0h1.7v7.0h-1.7ZM865.7,248.0h1.7v1.6h-1.7ZM875.0,242.0h1.7v2.0h-1.7ZM911.3,246.5h1.7v1.6h-1.7ZM926.5,234.4h1.7v12.0h-1.7ZM961.4,255.6h1.7v1.6h-1.7Z" fill="#2c8cf0"/>
</g>
<text transform="translate(0,185.5) scale(0.74,1)" x="962.16 968.92" y="0" text-anchor="middle" font-family="Liberation Sans" font-size="10" fill="#c4c4c4">30</text>
<text transform="translate(0,368.2) scale(0.74,1)" x="962.16 968.92" y="0" text-anchor="middle" font-family="Liberation Sans" font-size="10" fill="#c4c4c4">30</text>
<text transform="translate(0,532.2) scale(0.74,1)" x="962.16 968.92" y="0" text-anchor="middle" font-family="Liberation Sans" font-size="10" fill="#c4c4c4">30</text>
<use href="#k26178" transform="translate(5.83,41.20) scale(0.86)" stroke="#d0d0d0" stroke-width="1.10"/><use href="#k21051" transform="translate(15.69,41.20) scale(0.86)" stroke="#d0d0d0" stroke-width="1.10"/><use href="#k22987" transform="translate(60.06,41.20) scale(0.86)" stroke="#d0d0d0" stroke-width="1.10"/><use href="#k20516" transform="translate(69.92,41.20) scale(0.86)" stroke="#d0d0d0" stroke-width="1.10"/><use href="#k39640" transform="translate(119.22,41.20) scale(0.86)" stroke="#d0d0d0" stroke-width="1.10"/><use href="#k20516" transform="translate(129.08,41.20) scale(0.86)" stroke="#d0d0d0" stroke-width="1.10"/><use href="#k23433" transform="translate(178.38,41.20) scale(0.86)" stroke="#d0d0d0" stroke-width="1.10"/><use href="#k20516" transform="translate(188.24,41.20) scale(0.86)" stroke="#d0d0d0" stroke-width="1.10"/><use href="#k32066" transform="translate(237.54,41.20) scale(0.86)" stroke="#d0d0d0" stroke-width="1.10"/><use href="#k20516" transform="translate(247.40,41.20) scale(0.86)" stroke="#d0d0d0" stroke-width="1.10"/><text transform="translate(0,49.2) scale(0.74,1)" x="37.01 43.67 50.33 56.99 63.66 70.32 110.29 116.95 123.61 130.28 136.94 143.60 150.26 190.24 196.90 203.56 210.22 216.89 223.55 230.21 270.18 276.84 283.51 290.17 296.83 303.49 310.16 350.13 356.79 363.45 370.11 376.78 383.44 390.10" y="0" text-anchor="middle" font-family="Liberation Sans" font-size="10" fill="#d0d0d0">:06:00:16,440:16,440:16,440:16,440</text>
<use href="#k26178" transform="translate(5.83,208.20) scale(0.86)" stroke="#d0d0d0" stroke-width="1.10"/><use href="#k21051" transform="translate(15.69,208.20) scale(0.86)" stroke="#d0d0d0" stroke-width="1.10"/><use href="#k22987" transform="translate(60.06,208.20) scale(0.86)" stroke="#d0d0d0" stroke-width="1.10"/><use href="#k20516" transform="translate(69.92,208.20) scale(0.86)" stroke="#d0d0d0" stroke-width="1.10"/><use href="#k39640" transform="translate(114.29,208.20) scale(0.86)" stroke="#d0d0d0" stroke-width="1.10"/><use href="#k20516" transform="translate(124.15,208.20) scale(0.86)" stroke="#d0d0d0" stroke-width="1.10"/><use href="#k23433" transform="translate(168.52,208.20) scale(0.86)" stroke="#d0d0d0" stroke-width="1.10"/><use href="#k20516" transform="translate(178.38,208.20) scale(0.86)" stroke="#d0d0d0" stroke-width="1.10"/><use href="#k32066" transform="translate(222.75,208.20) scale(0.86)" stroke="#d0d0d0" stroke-width="1.10"/><use href="#k20516" transform="translate(232.61,208.20) scale(0.86)" stroke="#d0d0d0" stroke-width="1.10"/><text transform="translate(0,216.2) scale(0.74,1)" x="37.01 43.67 50.33 56.99 63.66 70.32 110.29 116.95 123.61 130.28 136.94 143.60 183.57 190.24 196.90 203.56 210.22 216.89 256.86 263.52 270.18 276.84 283.51 290.17 330.14 336.80 343.47 350.13 356.79 363.45" y="0" text-anchor="middle" font-family="Liberation Sans" font-size="10" fill="#d0d0d0">:06:00:5,931:5,931:5,931:5,931</text>
<use href="#k37329" transform="translate(10.70,390.20) scale(0.86)" stroke="#d0d0d0" stroke-width="1.10"/><path d="M86.50,391.70l6.5,6.5m0,-6.5l-6.5,6.5" stroke="#d0d0d0" stroke-width="0.95" fill="none"/><rect x="121.30" y="394.20" width="5.5" height="1.1" fill="#d0d0d0"/><use href="#k30333" transform="translate(135.70,390.20) scale(0.86)" stroke="#d0d0d0" stroke-width="1.10"/><use href="#k37329" transform="translate(145.70,390.20) scale(0.86)" stroke="#d0d0d0" stroke-width="1.10"/><path d="M216.50,391.70l6.5,6.5m0,-6.5l-6.5,6.5" stroke="#d0d0d0" stroke-width="0.95" fill="none"/><use href="#k32066" transform="translate(250.70,390.20) scale(0.86)" stroke="#d0d0d0" stroke-width="1.10"/><use href="#k20516" transform="translate(260.70,390.20) scale(0.86)" stroke="#d0d0d0" stroke-width="1.10"/><use href="#k26178" transform="translate(275.70,390.20) scale(0.86)" stroke="#d0d0d0" stroke-width="1.10"/><use href="#k21051" transform="translate(285.70,390.20) scale(0.86)" stroke="#d0d0d0" stroke-width="1.10"/><text transform="translate(0,398.2) scale(0.74,1)" x="10.14 37.16 43.92 50.68 57.43 64.19 77.70 84.46 91.22 97.97 104.73 111.49 131.76 138.51 145.27 152.03 158.78 179.05 219.59 226.35 233.11 239.86 246.62 260.14 266.89 273.65 280.41 287.16 307.43 314.19 320.95 327.70 334.46 402.03 408.78 415.54 422.30 429.05 435.81 449.32 456.08 462.84 469.59 476.35 483.11" y="0" text-anchor="middle" font-family="Liberation Sans" font-size="10" fill="#d0d0d0">[26/0816,4401.00][26/085,9311.00]:06:0010,509</text>
<rect x="0" y="20" width="2" height="533" fill="#a4a4a4"/><rect x="2" y="20" width="3" height="533" fill="#d2d2d2"/>
<rect x="5" y="39" width="1" height="150" fill="#787878"/><rect x="5" y="206" width="1" height="165" fill="#787878"/><rect x="5" y="388" width="1" height="147" fill="#787878"/>
<rect x="972" y="39" width="47" height="17" fill="#e0e0e0"/>
<text transform="translate(0,49.8) scale(0.78,1)" x="1259.04 1265.58 1272.12 1278.65 1285.19 1291.73" y="0" text-anchor="middle" font-family="Liberation Sans" font-size="10.5" font-weight="bold" fill="#101010">16,440</text>
<rect x="972" y="250" width="47" height="18" fill="#e0e0e0"/>
<text transform="translate(0,261.2) scale(0.78,1)" x="1262.24 1268.78 1275.32 1281.86 1288.40" y="0" text-anchor="middle" font-family="Liberation Sans" font-size="10.5" font-weight="bold" fill="#101010">5,931</text>
<rect x="972" y="397.5" width="47" height="18.0" fill="#e0e0e0"/>
<text transform="translate(0,409.6) scale(0.78,1)" x="1259.04 1265.58 1272.12 1278.65 1285.19 1291.73" y="0" text-anchor="middle" font-family="Liberation Sans" font-size="10.5" font-weight="bold" fill="#101010">10,509</text>
<rect x="0" y="548" width="1024" height="5" fill="#c8c8c8"/><rect x="5" y="548" width="1014" height="1" fill="#dcdcdc"/>
<rect x="0" y="548" width="2" height="5" fill="#a4a4a4"/>
</svg></body></html>
